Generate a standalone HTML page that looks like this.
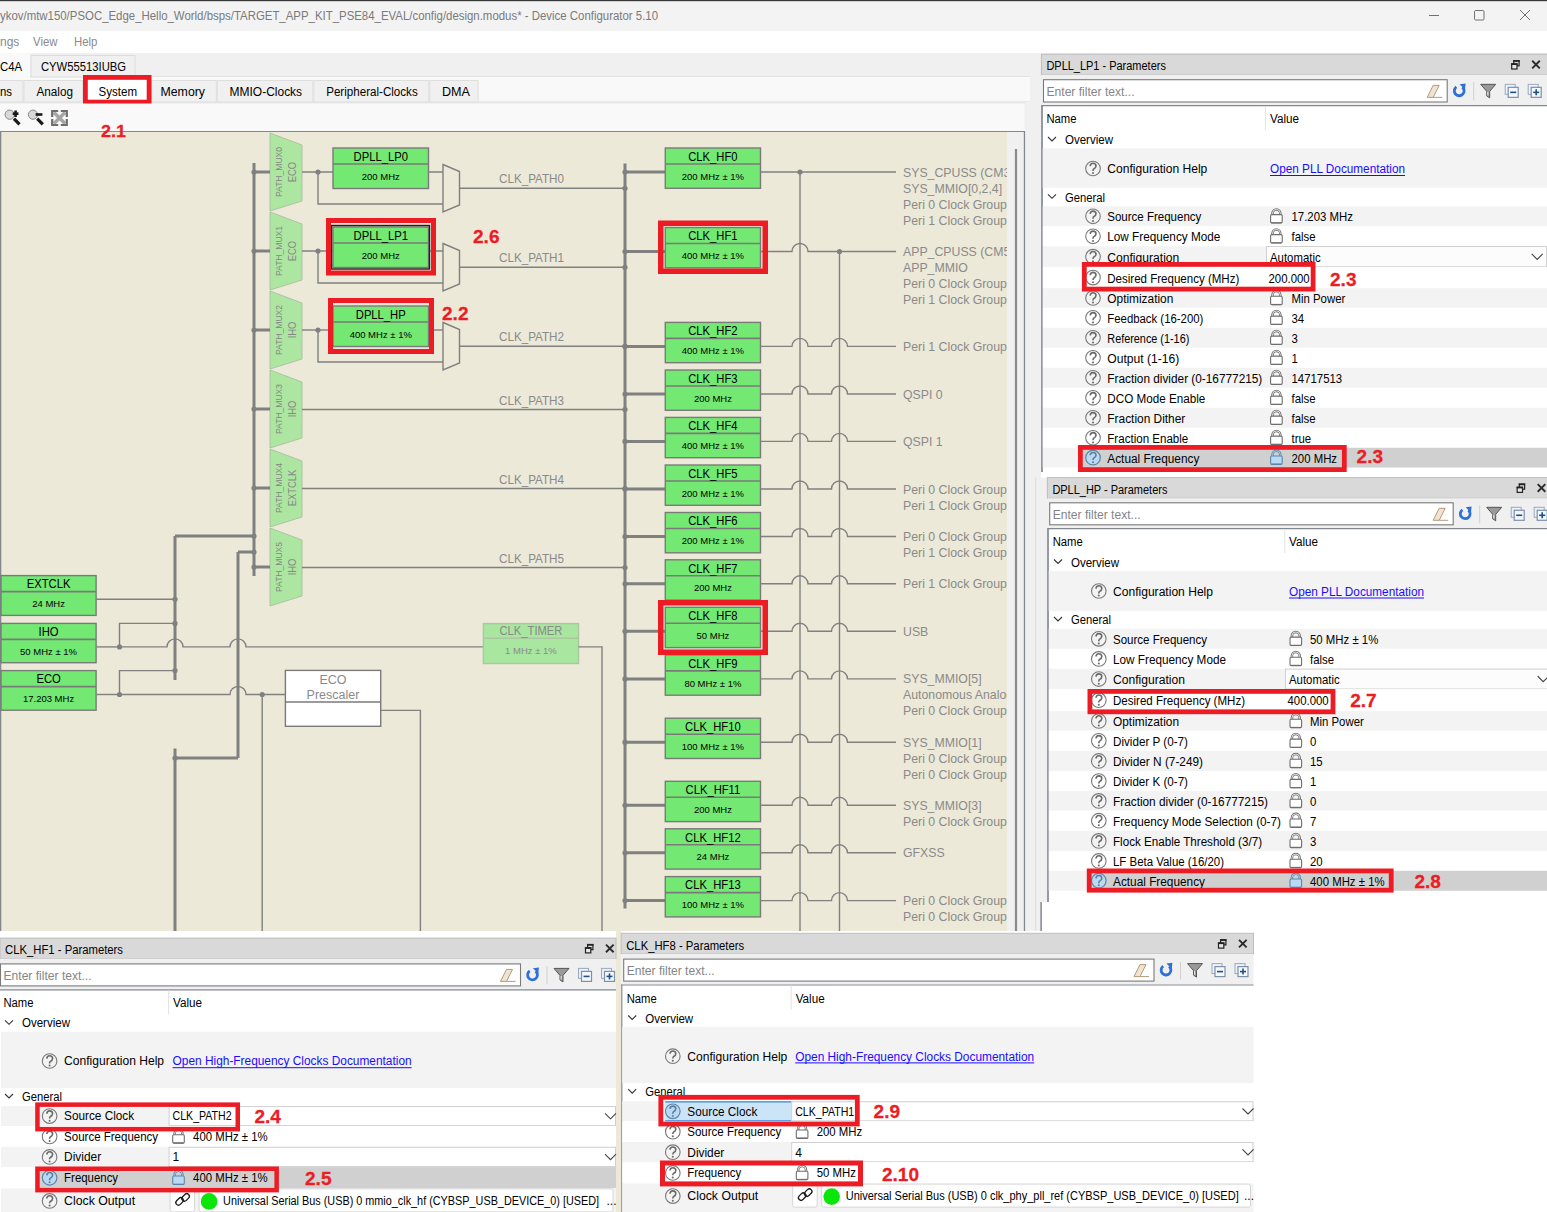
<!DOCTYPE html><html><head><meta charset="utf-8"><style>html,body{margin:0;padding:0;background:#fff;overflow:hidden}svg{display:block}</style></head><body><svg width="1547" height="1212" viewBox="0 0 1547 1212" font-family="Liberation Sans">
<rect x="0" y="0" width="1547" height="1212" fill="#ffffff" />
<rect x="0" y="0" width="1547" height="31" fill="#f3f3f3" />
<rect x="0" y="0" width="1547" height="1.2" fill="#3a3a3a" />
<text x="0" y="20" font-size="12.5" fill="#7a7a7a" textLength="658" lengthAdjust="spacingAndGlyphs" >ykov/mtw150/PSOC_Edge_Hello_World/bsps/TARGET_APP_KIT_PSE84_EVAL/config/design.modus* - Device Configurator 5.10</text>
<line x1="1429" y1="15.5" x2="1439" y2="15.5" stroke="#707070" stroke-width="1"/>
<rect x="1474.5" y="10.5" width="9.5" height="9.5" fill="none" stroke="#707070" stroke-width="1" rx="1.2"/>
<path d="M1520 10 L1530 20 M1530 10 L1520 20" stroke="#707070" stroke-width="1" fill="none" />
<rect x="0" y="31" width="1547" height="22" fill="#ffffff" />
<text x="0" y="46" font-size="12" fill="#8a8a8a" >ngs</text>
<text transform="translate(33 46) scale(0.95 1)" font-size="12" fill="#8a8a8a" >View</text>
<text transform="translate(74 46) scale(0.95 1)" font-size="12" fill="#8a8a8a" >Help</text>
<rect x="0" y="53" width="1040" height="878" fill="#f0f0f0" />
<rect x="-1" y="76.5" width="1035.2" height="860" fill="#f9f9f9" stroke="#e3e3e3" stroke-width="1" />
<line x1="0" y1="101.7" x2="1030" y2="101.7" stroke="#e6e6e6" stroke-width="1"/>
<line x1="1030" y1="101.7" x2="1030" y2="931" stroke="#e6e6e6" stroke-width="1"/>
<line x1="1026.4" y1="103.5" x2="1026.4" y2="931" stroke="#ebebeb" stroke-width="1"/>
<rect x="0" y="53" width="30" height="24" fill="#f9f9f9" />
<text transform="translate(0 71) scale(0.95 1)" font-size="12" fill="#000" >C4A</text>
<rect x="31" y="55.5" width="104" height="21.5" fill="#f0f0f0" stroke="#dcdcdc" stroke-width="1" />
<text x="41" y="71" font-size="12" fill="#000" textLength="85" lengthAdjust="spacingAndGlyphs" >CYW55513IUBG</text>
<line x1="0" y1="103" x2="1026.4" y2="103" stroke="#dadada" stroke-width="1"/>
<rect x="-19.5" y="80.5" width="42.5" height="21.5" fill="#f0f0f0" stroke="#dedede" stroke-width="1" />
<rect x="24.0" y="80.5" width="58.5" height="21.5" fill="#f0f0f0" stroke="#dedede" stroke-width="1" />
<rect x="83" y="78" width="68" height="25" fill="#ffffff" />
<rect x="151.5" y="80.5" width="64.80000000000001" height="21.5" fill="#f0f0f0" stroke="#dedede" stroke-width="1" />
<rect x="217.3" y="80.5" width="95.59999999999997" height="21.5" fill="#f0f0f0" stroke="#dedede" stroke-width="1" />
<rect x="313.9" y="80.5" width="114.90000000000003" height="21.5" fill="#f0f0f0" stroke="#dedede" stroke-width="1" />
<rect x="429.8" y="80.5" width="48.30000000000001" height="21.5" fill="#f0f0f0" stroke="#dedede" stroke-width="1" />
<text transform="translate(0 96) scale(0.95 1)" font-size="12" fill="#000" >ns</text>
<text x="36.5" y="96" font-size="12" fill="#000" textLength="36.5" lengthAdjust="spacingAndGlyphs" >Analog</text>
<text x="98.5" y="96" font-size="12" fill="#000" textLength="38.5" lengthAdjust="spacingAndGlyphs" >System</text>
<text x="160.5" y="96" font-size="12" fill="#000" textLength="44.5" lengthAdjust="spacingAndGlyphs" >Memory</text>
<text x="229.6" y="96" font-size="12" fill="#000" textLength="72.5" lengthAdjust="spacingAndGlyphs" >MMIO-Clocks</text>
<text x="326.2" y="96" font-size="12" fill="#000" textLength="91.5" lengthAdjust="spacingAndGlyphs" >Peripheral-Clocks</text>
<text x="442" y="96" font-size="12" fill="#000" textLength="28" lengthAdjust="spacingAndGlyphs" >DMA</text>
<rect x="85.4" y="77.4" width="63.7" height="24.7" fill="none" stroke="#ed1c24" stroke-width="4.8" />
<rect x="0" y="103.5" width="1026" height="27.5" fill="#f9f9f9" />
<circle cx="9.7" cy="114.7" r="4.6" fill="#d9d9d9" stroke="#8a8a8a" stroke-width="1"/>
<line x1="13.899999999999999" y1="118.6" x2="19.5" y2="124.4" stroke="#1a1a1a" stroke-width="3.2"/>
<line x1="12.7" y1="113.7" x2="18.5" y2="113.7" stroke="#1a1a1a" stroke-width="2.6"/>
<line x1="15.6" y1="110.5" x2="15.6" y2="117" stroke="#1a1a1a" stroke-width="2.6"/>
<circle cx="33" cy="114.7" r="4.6" fill="#d9d9d9" stroke="#8a8a8a" stroke-width="1"/>
<line x1="37.2" y1="118.6" x2="42.8" y2="124.4" stroke="#1a1a1a" stroke-width="3.2"/>
<line x1="35.6" y1="114.5" x2="42.4" y2="114.5" stroke="#1a1a1a" stroke-width="2.6"/>
<path d="M54 112.5 L65 123.5 M65 112.5 L54 123.5" stroke="#a6a6a6" stroke-width="3.4" fill="none" />
<path d="M52.2 117 L52.2 111 L58.2 111 M60.8 111 L66.8 111 L66.8 117 M66.8 119 L66.8 125 L60.8 125 M58.2 125 L52.2 125 L52.2 119" stroke="#6e6e6e" stroke-width="2.2" fill="none" />
<defs><clipPath id="diag"><rect x="0" y="131.5" width="1007" height="800"/></clipPath></defs>
<rect x="0" y="131" width="1025" height="800" fill="#ece9d8" />
<rect x="1007" y="132" width="17.5" height="799" fill="#f0f0f0" />
<line x1="0" y1="131.5" x2="1025" y2="131.5" stroke="#828790" stroke-width="1.2"/>
<line x1="0.6" y1="131" x2="0.6" y2="931" stroke="#828790" stroke-width="1.4"/>
<line x1="1024.5" y1="131" x2="1024.5" y2="931" stroke="#828790" stroke-width="1.2"/>
<line x1="1016" y1="149" x2="1016" y2="931" stroke="#8a8a8a" stroke-width="2.2"/>
<g clip-path="url(#diag)">
<path d="M270 133 L302 145 L302 201 L270 211 Z" stroke="#a9bfa2" stroke-width="0.9" fill="#ade6a0" />
<g transform="translate(285 172) rotate(-90)">
<text x="-25" y="-3.1" font-size="9.8" fill="#868686" textLength="50" lengthAdjust="spacingAndGlyphs" >PATH_MUX0</text>
<text transform="translate(0 11.4) scale(0.92 1)" font-size="10.2" fill="#868686" text-anchor="middle" >ECO</text>
</g>
<line x1="254" y1="172" x2="270" y2="172" stroke="#808080" stroke-width="3"/>
<circle cx="254" cy="172" r="2.6" fill="#808080"/>
<path d="M270 212 L302 224 L302 280 L270 290 Z" stroke="#a9bfa2" stroke-width="0.9" fill="#ade6a0" />
<g transform="translate(285 251) rotate(-90)">
<text x="-25" y="-3.1" font-size="9.8" fill="#868686" textLength="50" lengthAdjust="spacingAndGlyphs" >PATH_MUX1</text>
<text transform="translate(0 11.4) scale(0.92 1)" font-size="10.2" fill="#868686" text-anchor="middle" >ECO</text>
</g>
<line x1="254" y1="251" x2="270" y2="251" stroke="#808080" stroke-width="3"/>
<circle cx="254" cy="251" r="2.6" fill="#808080"/>
<path d="M270 291 L302 303 L302 359 L270 369 Z" stroke="#a9bfa2" stroke-width="0.9" fill="#ade6a0" />
<g transform="translate(285 330) rotate(-90)">
<text x="-25" y="-3.1" font-size="9.8" fill="#868686" textLength="50" lengthAdjust="spacingAndGlyphs" >PATH_MUX2</text>
<text transform="translate(0 11.4) scale(0.92 1)" font-size="10.2" fill="#868686" text-anchor="middle" >IHO</text>
</g>
<line x1="254" y1="330" x2="270" y2="330" stroke="#808080" stroke-width="3"/>
<circle cx="254" cy="330" r="2.6" fill="#808080"/>
<path d="M270 370 L302 382 L302 438 L270 448 Z" stroke="#a9bfa2" stroke-width="0.9" fill="#ade6a0" />
<g transform="translate(285 409) rotate(-90)">
<text x="-25" y="-3.1" font-size="9.8" fill="#868686" textLength="50" lengthAdjust="spacingAndGlyphs" >PATH_MUX3</text>
<text transform="translate(0 11.4) scale(0.92 1)" font-size="10.2" fill="#868686" text-anchor="middle" >IHO</text>
</g>
<line x1="254" y1="409" x2="270" y2="409" stroke="#808080" stroke-width="3"/>
<circle cx="254" cy="409" r="2.6" fill="#808080"/>
<path d="M270 449 L302 461 L302 517 L270 527 Z" stroke="#a9bfa2" stroke-width="0.9" fill="#ade6a0" />
<g transform="translate(285 488) rotate(-90)">
<text x="-25" y="-3.1" font-size="9.8" fill="#868686" textLength="50" lengthAdjust="spacingAndGlyphs" >PATH_MUX4</text>
<text transform="translate(0 11.4) scale(0.92 1)" font-size="10.2" fill="#868686" text-anchor="middle" >EXTCLK</text>
</g>
<line x1="254" y1="488" x2="270" y2="488" stroke="#808080" stroke-width="3"/>
<circle cx="254" cy="488" r="2.6" fill="#808080"/>
<path d="M270 528 L302 540 L302 596 L270 606 Z" stroke="#a9bfa2" stroke-width="0.9" fill="#ade6a0" />
<g transform="translate(285 567) rotate(-90)">
<text x="-25" y="-3.1" font-size="9.8" fill="#868686" textLength="50" lengthAdjust="spacingAndGlyphs" >PATH_MUX5</text>
<text transform="translate(0 11.4) scale(0.92 1)" font-size="10.2" fill="#868686" text-anchor="middle" >IHO</text>
</g>
<line x1="254" y1="567" x2="270" y2="567" stroke="#808080" stroke-width="3"/>
<circle cx="254" cy="567" r="2.6" fill="#808080"/>
<line x1="254" y1="163" x2="254" y2="576" stroke="#808080" stroke-width="3"/>
<circle cx="254" cy="536" r="2.6" fill="#808080"/>
<circle cx="254" cy="552" r="2.6" fill="#808080"/>
<line x1="302" y1="172" x2="333" y2="172" stroke="#808080" stroke-width="1.4"/>
<circle cx="318" cy="172" r="2.6" fill="#808080"/>
<path d="M318 172 L318 204 L443 204" stroke="#808080" stroke-width="1.4" fill="none" />
<rect x="333" y="148" width="95.5" height="40.5" fill="#73e873" stroke="#7a7a7a" stroke-width="1.4" />
<line x1="333" y1="164" x2="428.5" y2="164" stroke="#7a7a7a" stroke-width="1.6"/>
<text transform="translate(380.75 160.8) scale(0.9 1)" font-size="12.5" fill="#000" text-anchor="middle" >DPLL_LP0</text>
<text x="380.75" y="179.75" font-size="9.5" fill="#000" text-anchor="middle" >200 MHz</text>
<line x1="428.5" y1="172" x2="443" y2="172" stroke="#808080" stroke-width="1.4"/>
<path d="M443 164.5 L459.5 171.5 L459.5 205 L443 212 Z" stroke="#808080" stroke-width="1.4" fill="none" />
<line x1="459.5" y1="188.3" x2="625" y2="188.3" stroke="#808080" stroke-width="1.4"/>
<line x1="302" y1="251" x2="333" y2="251" stroke="#808080" stroke-width="1.4"/>
<circle cx="318" cy="251" r="2.6" fill="#808080"/>
<path d="M318 251 L318 283 L443 283" stroke="#808080" stroke-width="1.4" fill="none" />
<rect x="333" y="227" width="95.5" height="40.5" fill="#73e873" stroke="#7a7a7a" stroke-width="1.4" />
<line x1="333" y1="243" x2="428.5" y2="243" stroke="#7a7a7a" stroke-width="1.6"/>
<text transform="translate(380.75 239.8) scale(0.9 1)" font-size="12.5" fill="#000" text-anchor="middle" >DPLL_LP1</text>
<text x="380.75" y="258.75" font-size="9.5" fill="#000" text-anchor="middle" >200 MHz</text>
<line x1="428.5" y1="251" x2="443" y2="251" stroke="#808080" stroke-width="1.4"/>
<path d="M443 243.5 L459.5 250.5 L459.5 284 L443 291 Z" stroke="#808080" stroke-width="1.4" fill="none" />
<line x1="459.5" y1="267.3" x2="625" y2="267.3" stroke="#808080" stroke-width="1.4"/>
<line x1="302" y1="330" x2="333" y2="330" stroke="#808080" stroke-width="1.4"/>
<circle cx="318" cy="330" r="2.6" fill="#808080"/>
<path d="M318 330 L318 362 L443 362" stroke="#808080" stroke-width="1.4" fill="none" />
<rect x="333" y="306" width="95.5" height="40.5" fill="#73e873" stroke="#7a7a7a" stroke-width="1.4" />
<line x1="333" y1="322" x2="428.5" y2="322" stroke="#7a7a7a" stroke-width="1.6"/>
<text transform="translate(380.75 318.8) scale(0.9 1)" font-size="12.5" fill="#000" text-anchor="middle" >DPLL_HP</text>
<text x="380.75" y="337.75" font-size="9.5" fill="#000" text-anchor="middle" >400 MHz ± 1%</text>
<line x1="428.5" y1="330" x2="443" y2="330" stroke="#808080" stroke-width="1.4"/>
<path d="M443 322.5 L459.5 329.5 L459.5 363 L443 370 Z" stroke="#808080" stroke-width="1.4" fill="none" />
<line x1="459.5" y1="346.3" x2="625" y2="346.3" stroke="#808080" stroke-width="1.4"/>
<rect x="331.5" y="225.5" width="98" height="43.5" fill="none" stroke="#202020" stroke-width="1.4" />
<line x1="302" y1="409.5" x2="625" y2="409.5" stroke="#808080" stroke-width="1.4"/>
<line x1="302" y1="488.5" x2="625" y2="488.5" stroke="#808080" stroke-width="1.4"/>
<line x1="302" y1="567.5" x2="625" y2="567.5" stroke="#808080" stroke-width="1.4"/>
<circle cx="625" cy="188.3" r="2.6" fill="#808080"/>
<text x="499" y="183.3" font-size="12.5" fill="#8a8a8a" textLength="65" lengthAdjust="spacingAndGlyphs" >CLK_PATH0</text>
<circle cx="625" cy="267.3" r="2.6" fill="#808080"/>
<text x="499" y="262.3" font-size="12.5" fill="#8a8a8a" textLength="65" lengthAdjust="spacingAndGlyphs" >CLK_PATH1</text>
<circle cx="625" cy="346.3" r="2.6" fill="#808080"/>
<text x="499" y="341.3" font-size="12.5" fill="#8a8a8a" textLength="65" lengthAdjust="spacingAndGlyphs" >CLK_PATH2</text>
<circle cx="625" cy="409.5" r="2.6" fill="#808080"/>
<text x="499" y="404.5" font-size="12.5" fill="#8a8a8a" textLength="65" lengthAdjust="spacingAndGlyphs" >CLK_PATH3</text>
<circle cx="625" cy="488.5" r="2.6" fill="#808080"/>
<text x="499" y="483.5" font-size="12.5" fill="#8a8a8a" textLength="65" lengthAdjust="spacingAndGlyphs" >CLK_PATH4</text>
<circle cx="625" cy="567.5" r="2.6" fill="#808080"/>
<text x="499" y="562.5" font-size="12.5" fill="#8a8a8a" textLength="65" lengthAdjust="spacingAndGlyphs" >CLK_PATH5</text>
<line x1="625" y1="163.6" x2="625" y2="908.5" stroke="#808080" stroke-width="3"/>
<line x1="800" y1="172" x2="800" y2="931" stroke="#808080" stroke-width="1.4"/>
<line x1="839.5" y1="251.5" x2="839.5" y2="931" stroke="#808080" stroke-width="1.4"/>
<line x1="625" y1="172" x2="665" y2="172" stroke="#808080" stroke-width="3"/>
<circle cx="625" cy="172" r="2.6" fill="#808080"/>
<rect x="665.3" y="148" width="95.20000000000005" height="40.30000000000001" fill="#73e873" stroke="#7a7a7a" stroke-width="1.4" />
<line x1="665.3" y1="164" x2="760.5" y2="164" stroke="#7a7a7a" stroke-width="1.6"/>
<text transform="translate(712.9 160.8) scale(0.9 1)" font-size="12.5" fill="#000" text-anchor="middle" >CLK_HF0</text>
<text x="712.9" y="179.65" font-size="9.5" fill="#000" text-anchor="middle" >200 MHz ± 1%</text>
<line x1="760.5" y1="172" x2="896" y2="172" stroke="#808080" stroke-width="1.4"/>
<circle cx="800" cy="172" r="2.6" fill="#808080"/>
<text transform="translate(903 176.5) scale(0.985 1)" font-size="12.5" fill="#8a8a8a" >SYS_CPUSS (CM33)</text>
<text transform="translate(903 192.5) scale(0.985 1)" font-size="12.5" fill="#8a8a8a" >SYS_MMIO[0,2,4]</text>
<text transform="translate(903 208.5) scale(0.985 1)" font-size="12.5" fill="#8a8a8a" >Peri 0 Clock Group</text>
<text transform="translate(903 224.5) scale(0.985 1)" font-size="12.5" fill="#8a8a8a" >Peri 1 Clock Group</text>
<line x1="625" y1="251.5" x2="665" y2="251.5" stroke="#808080" stroke-width="3"/>
<circle cx="625" cy="251.5" r="2.6" fill="#808080"/>
<rect x="665.3" y="227.5" width="95.20000000000005" height="40.30000000000001" fill="#73e873" stroke="#7a7a7a" stroke-width="1.4" />
<line x1="665.3" y1="243.5" x2="760.5" y2="243.5" stroke="#7a7a7a" stroke-width="1.6"/>
<text transform="translate(712.9 240.3) scale(0.9 1)" font-size="12.5" fill="#000" text-anchor="middle" >CLK_HF1</text>
<text x="712.9" y="259.15" font-size="9.5" fill="#000" text-anchor="middle" >400 MHz ± 1%</text>
<path d="M760.5 251.5 L792 251.5 A8 8 0 0 1 808 251.5 L896 251.5" stroke="#808080" stroke-width="1.4" fill="none" />
<circle cx="839.5" cy="251.5" r="2.6" fill="#808080"/>
<text transform="translate(903 256.0) scale(0.985 1)" font-size="12.5" fill="#8a8a8a" >APP_CPUSS (CM55)</text>
<text transform="translate(903 272.0) scale(0.985 1)" font-size="12.5" fill="#8a8a8a" >APP_MMIO</text>
<text transform="translate(903 288.0) scale(0.985 1)" font-size="12.5" fill="#8a8a8a" >Peri 0 Clock Group</text>
<text transform="translate(903 304.0) scale(0.985 1)" font-size="12.5" fill="#8a8a8a" >Peri 1 Clock Group</text>
<line x1="625" y1="346.4" x2="665" y2="346.4" stroke="#808080" stroke-width="3"/>
<circle cx="625" cy="346.4" r="2.6" fill="#808080"/>
<rect x="665.3" y="322.4" width="95.20000000000005" height="40.30000000000001" fill="#73e873" stroke="#7a7a7a" stroke-width="1.4" />
<line x1="665.3" y1="338.4" x2="760.5" y2="338.4" stroke="#7a7a7a" stroke-width="1.6"/>
<text transform="translate(712.9 335.2) scale(0.9 1)" font-size="12.5" fill="#000" text-anchor="middle" >CLK_HF2</text>
<text x="712.9" y="354.04999999999995" font-size="9.5" fill="#000" text-anchor="middle" >400 MHz ± 1%</text>
<path d="M760.5 346.4 L792 346.4 A8 8 0 0 1 808 346.4 L831.5 346.4 A8 8 0 0 1 847.5 346.4 L896 346.4" stroke="#808080" stroke-width="1.4" fill="none" />
<text transform="translate(903 350.9) scale(0.985 1)" font-size="12.5" fill="#8a8a8a" >Peri 1 Clock Group</text>
<line x1="625" y1="394" x2="665" y2="394" stroke="#808080" stroke-width="3"/>
<circle cx="625" cy="394" r="2.6" fill="#808080"/>
<rect x="665.3" y="370" width="95.20000000000005" height="40.30000000000001" fill="#73e873" stroke="#7a7a7a" stroke-width="1.4" />
<line x1="665.3" y1="386" x2="760.5" y2="386" stroke="#7a7a7a" stroke-width="1.6"/>
<text transform="translate(712.9 382.8) scale(0.9 1)" font-size="12.5" fill="#000" text-anchor="middle" >CLK_HF3</text>
<text x="712.9" y="401.65" font-size="9.5" fill="#000" text-anchor="middle" >200 MHz</text>
<path d="M760.5 394 L792 394 A8 8 0 0 1 808 394 L831.5 394 A8 8 0 0 1 847.5 394 L896 394" stroke="#808080" stroke-width="1.4" fill="none" />
<text transform="translate(903 398.5) scale(0.985 1)" font-size="12.5" fill="#8a8a8a" >QSPI 0</text>
<line x1="625" y1="441.4" x2="665" y2="441.4" stroke="#808080" stroke-width="3"/>
<circle cx="625" cy="441.4" r="2.6" fill="#808080"/>
<rect x="665.3" y="417.4" width="95.20000000000005" height="40.30000000000001" fill="#73e873" stroke="#7a7a7a" stroke-width="1.4" />
<line x1="665.3" y1="433.4" x2="760.5" y2="433.4" stroke="#7a7a7a" stroke-width="1.6"/>
<text transform="translate(712.9 430.2) scale(0.9 1)" font-size="12.5" fill="#000" text-anchor="middle" >CLK_HF4</text>
<text x="712.9" y="449.04999999999995" font-size="9.5" fill="#000" text-anchor="middle" >400 MHz ± 1%</text>
<path d="M760.5 441.4 L792 441.4 A8 8 0 0 1 808 441.4 L831.5 441.4 A8 8 0 0 1 847.5 441.4 L896 441.4" stroke="#808080" stroke-width="1.4" fill="none" />
<text transform="translate(903 445.9) scale(0.985 1)" font-size="12.5" fill="#8a8a8a" >QSPI 1</text>
<line x1="625" y1="489" x2="665" y2="489" stroke="#808080" stroke-width="3"/>
<circle cx="625" cy="489" r="2.6" fill="#808080"/>
<rect x="665.3" y="465" width="95.20000000000005" height="40.30000000000001" fill="#73e873" stroke="#7a7a7a" stroke-width="1.4" />
<line x1="665.3" y1="481" x2="760.5" y2="481" stroke="#7a7a7a" stroke-width="1.6"/>
<text transform="translate(712.9 477.8) scale(0.9 1)" font-size="12.5" fill="#000" text-anchor="middle" >CLK_HF5</text>
<text x="712.9" y="496.65" font-size="9.5" fill="#000" text-anchor="middle" >200 MHz ± 1%</text>
<path d="M760.5 489 L792 489 A8 8 0 0 1 808 489 L831.5 489 A8 8 0 0 1 847.5 489 L896 489" stroke="#808080" stroke-width="1.4" fill="none" />
<text transform="translate(903 493.5) scale(0.985 1)" font-size="12.5" fill="#8a8a8a" >Peri 0 Clock Group</text>
<text transform="translate(903 509.5) scale(0.985 1)" font-size="12.5" fill="#8a8a8a" >Peri 1 Clock Group</text>
<line x1="625" y1="536.5" x2="665" y2="536.5" stroke="#808080" stroke-width="3"/>
<circle cx="625" cy="536.5" r="2.6" fill="#808080"/>
<rect x="665.3" y="512.5" width="95.20000000000005" height="40.299999999999955" fill="#73e873" stroke="#7a7a7a" stroke-width="1.4" />
<line x1="665.3" y1="528.5" x2="760.5" y2="528.5" stroke="#7a7a7a" stroke-width="1.6"/>
<text transform="translate(712.9 525.3) scale(0.9 1)" font-size="12.5" fill="#000" text-anchor="middle" >CLK_HF6</text>
<text x="712.9" y="544.15" font-size="9.5" fill="#000" text-anchor="middle" >200 MHz ± 1%</text>
<path d="M760.5 536.5 L792 536.5 A8 8 0 0 1 808 536.5 L831.5 536.5 A8 8 0 0 1 847.5 536.5 L896 536.5" stroke="#808080" stroke-width="1.4" fill="none" />
<text transform="translate(903 541.0) scale(0.985 1)" font-size="12.5" fill="#8a8a8a" >Peri 0 Clock Group</text>
<text transform="translate(903 557.0) scale(0.985 1)" font-size="12.5" fill="#8a8a8a" >Peri 1 Clock Group</text>
<line x1="625" y1="583.8" x2="665" y2="583.8" stroke="#808080" stroke-width="3"/>
<circle cx="625" cy="583.8" r="2.6" fill="#808080"/>
<rect x="665.3" y="559.8" width="95.20000000000005" height="40.299999999999955" fill="#73e873" stroke="#7a7a7a" stroke-width="1.4" />
<line x1="665.3" y1="575.8" x2="760.5" y2="575.8" stroke="#7a7a7a" stroke-width="1.6"/>
<text transform="translate(712.9 572.5999999999999) scale(0.9 1)" font-size="12.5" fill="#000" text-anchor="middle" >CLK_HF7</text>
<text x="712.9" y="591.4499999999999" font-size="9.5" fill="#000" text-anchor="middle" >200 MHz</text>
<path d="M760.5 583.8 L792 583.8 A8 8 0 0 1 808 583.8 L831.5 583.8 A8 8 0 0 1 847.5 583.8 L896 583.8" stroke="#808080" stroke-width="1.4" fill="none" />
<text transform="translate(903 588.3) scale(0.985 1)" font-size="12.5" fill="#8a8a8a" >Peri 1 Clock Group</text>
<line x1="625" y1="631.3" x2="665" y2="631.3" stroke="#808080" stroke-width="3"/>
<circle cx="625" cy="631.3" r="2.6" fill="#808080"/>
<rect x="665.3" y="607.3" width="95.20000000000005" height="40.299999999999955" fill="#73e873" stroke="#7a7a7a" stroke-width="1.4" />
<line x1="665.3" y1="623.3" x2="760.5" y2="623.3" stroke="#7a7a7a" stroke-width="1.6"/>
<text transform="translate(712.9 620.0999999999999) scale(0.9 1)" font-size="12.5" fill="#000" text-anchor="middle" >CLK_HF8</text>
<text x="712.9" y="638.9499999999999" font-size="9.5" fill="#000" text-anchor="middle" >50 MHz</text>
<path d="M760.5 631.3 L792 631.3 A8 8 0 0 1 808 631.3 L831.5 631.3 A8 8 0 0 1 847.5 631.3 L896 631.3" stroke="#808080" stroke-width="1.4" fill="none" />
<text transform="translate(903 635.8) scale(0.985 1)" font-size="12.5" fill="#8a8a8a" >USB</text>
<line x1="625" y1="678.9" x2="665" y2="678.9" stroke="#808080" stroke-width="3"/>
<circle cx="625" cy="678.9" r="2.6" fill="#808080"/>
<rect x="665.3" y="654.9" width="95.20000000000005" height="40.299999999999955" fill="#73e873" stroke="#7a7a7a" stroke-width="1.4" />
<line x1="665.3" y1="670.9" x2="760.5" y2="670.9" stroke="#7a7a7a" stroke-width="1.6"/>
<text transform="translate(712.9 667.6999999999999) scale(0.9 1)" font-size="12.5" fill="#000" text-anchor="middle" >CLK_HF9</text>
<text x="712.9" y="686.55" font-size="9.5" fill="#000" text-anchor="middle" >80 MHz ± 1%</text>
<path d="M760.5 678.9 L792 678.9 A8 8 0 0 1 808 678.9 L831.5 678.9 A8 8 0 0 1 847.5 678.9 L896 678.9" stroke="#808080" stroke-width="1.4" fill="none" />
<text transform="translate(903 683.4) scale(0.985 1)" font-size="12.5" fill="#8a8a8a" >SYS_MMIO[5]</text>
<text transform="translate(903 699.4) scale(0.985 1)" font-size="12.5" fill="#8a8a8a" >Autonomous Analog</text>
<text transform="translate(903 715.4) scale(0.985 1)" font-size="12.5" fill="#8a8a8a" >Peri 0 Clock Group</text>
<line x1="625" y1="742.2" x2="665" y2="742.2" stroke="#808080" stroke-width="3"/>
<circle cx="625" cy="742.2" r="2.6" fill="#808080"/>
<rect x="665.3" y="718.2" width="95.20000000000005" height="40.299999999999955" fill="#73e873" stroke="#7a7a7a" stroke-width="1.4" />
<line x1="665.3" y1="734.2" x2="760.5" y2="734.2" stroke="#7a7a7a" stroke-width="1.6"/>
<text transform="translate(712.9 731.0) scale(0.9 1)" font-size="12.5" fill="#000" text-anchor="middle" >CLK_HF10</text>
<text x="712.9" y="749.85" font-size="9.5" fill="#000" text-anchor="middle" >100 MHz ± 1%</text>
<path d="M760.5 742.2 L792 742.2 A8 8 0 0 1 808 742.2 L831.5 742.2 A8 8 0 0 1 847.5 742.2 L896 742.2" stroke="#808080" stroke-width="1.4" fill="none" />
<text transform="translate(903 746.7) scale(0.985 1)" font-size="12.5" fill="#8a8a8a" >SYS_MMIO[1]</text>
<text transform="translate(903 762.7) scale(0.985 1)" font-size="12.5" fill="#8a8a8a" >Peri 0 Clock Group</text>
<text transform="translate(903 778.7) scale(0.985 1)" font-size="12.5" fill="#8a8a8a" >Peri 0 Clock Group</text>
<line x1="625" y1="805.3" x2="665" y2="805.3" stroke="#808080" stroke-width="3"/>
<circle cx="625" cy="805.3" r="2.6" fill="#808080"/>
<rect x="665.3" y="781.3" width="95.20000000000005" height="40.299999999999955" fill="#73e873" stroke="#7a7a7a" stroke-width="1.4" />
<line x1="665.3" y1="797.3" x2="760.5" y2="797.3" stroke="#7a7a7a" stroke-width="1.6"/>
<text transform="translate(712.9 794.0999999999999) scale(0.9 1)" font-size="12.5" fill="#000" text-anchor="middle" >CLK_HF11</text>
<text x="712.9" y="812.9499999999999" font-size="9.5" fill="#000" text-anchor="middle" >200 MHz</text>
<path d="M760.5 805.3 L792 805.3 A8 8 0 0 1 808 805.3 L831.5 805.3 A8 8 0 0 1 847.5 805.3 L896 805.3" stroke="#808080" stroke-width="1.4" fill="none" />
<text transform="translate(903 809.8) scale(0.985 1)" font-size="12.5" fill="#8a8a8a" >SYS_MMIO[3]</text>
<text transform="translate(903 825.8) scale(0.985 1)" font-size="12.5" fill="#8a8a8a" >Peri 0 Clock Group</text>
<line x1="625" y1="852.8" x2="665" y2="852.8" stroke="#808080" stroke-width="3"/>
<circle cx="625" cy="852.8" r="2.6" fill="#808080"/>
<rect x="665.3" y="828.8" width="95.20000000000005" height="40.299999999999955" fill="#73e873" stroke="#7a7a7a" stroke-width="1.4" />
<line x1="665.3" y1="844.8" x2="760.5" y2="844.8" stroke="#7a7a7a" stroke-width="1.6"/>
<text transform="translate(712.9 841.5999999999999) scale(0.9 1)" font-size="12.5" fill="#000" text-anchor="middle" >CLK_HF12</text>
<text x="712.9" y="860.4499999999999" font-size="9.5" fill="#000" text-anchor="middle" >24 MHz</text>
<path d="M760.5 852.8 L792 852.8 A8 8 0 0 1 808 852.8 L831.5 852.8 A8 8 0 0 1 847.5 852.8 L896 852.8" stroke="#808080" stroke-width="1.4" fill="none" />
<text transform="translate(903 857.3) scale(0.985 1)" font-size="12.5" fill="#8a8a8a" >GFXSS</text>
<line x1="625" y1="900.6" x2="665" y2="900.6" stroke="#808080" stroke-width="3"/>
<circle cx="625" cy="900.6" r="2.6" fill="#808080"/>
<rect x="665.3" y="876.6" width="95.20000000000005" height="40.299999999999955" fill="#73e873" stroke="#7a7a7a" stroke-width="1.4" />
<line x1="665.3" y1="892.6" x2="760.5" y2="892.6" stroke="#7a7a7a" stroke-width="1.6"/>
<text transform="translate(712.9 889.4) scale(0.9 1)" font-size="12.5" fill="#000" text-anchor="middle" >CLK_HF13</text>
<text x="712.9" y="908.25" font-size="9.5" fill="#000" text-anchor="middle" >100 MHz ± 1%</text>
<path d="M760.5 900.6 L792 900.6 A8 8 0 0 1 808 900.6 L831.5 900.6 A8 8 0 0 1 847.5 900.6 L896 900.6" stroke="#808080" stroke-width="1.4" fill="none" />
<text transform="translate(903 905.1) scale(0.985 1)" font-size="12.5" fill="#8a8a8a" >Peri 0 Clock Group</text>
<text transform="translate(903 921.1) scale(0.985 1)" font-size="12.5" fill="#8a8a8a" >Peri 0 Clock Group</text>
<rect x="1" y="575.6" width="95.1" height="39.799999999999955" fill="#73e873" stroke="#7a7a7a" stroke-width="1.4" />
<line x1="1" y1="591.6" x2="96.1" y2="591.6" stroke="#7a7a7a" stroke-width="1.6"/>
<text transform="translate(48.55 588.4) scale(0.9 1)" font-size="12.5" fill="#000" text-anchor="middle" >EXTCLK</text>
<text x="48.55" y="607.0" font-size="9.5" fill="#000" text-anchor="middle" >24 MHz</text>
<rect x="1" y="623.4" width="95.1" height="39.30000000000007" fill="#73e873" stroke="#7a7a7a" stroke-width="1.4" />
<line x1="1" y1="639.4" x2="96.1" y2="639.4" stroke="#7a7a7a" stroke-width="1.6"/>
<text transform="translate(48.55 636.1999999999999) scale(0.9 1)" font-size="12.5" fill="#000" text-anchor="middle" >IHO</text>
<text x="48.55" y="654.55" font-size="9.5" fill="#000" text-anchor="middle" >50 MHz ± 1%</text>
<rect x="1" y="670.6" width="95.1" height="39.60000000000002" fill="#73e873" stroke="#7a7a7a" stroke-width="1.4" />
<line x1="1" y1="686.6" x2="96.1" y2="686.6" stroke="#7a7a7a" stroke-width="1.6"/>
<text transform="translate(48.55 683.4) scale(0.9 1)" font-size="12.5" fill="#000" text-anchor="middle" >ECO</text>
<text x="48.55" y="701.9000000000001" font-size="9.5" fill="#000" text-anchor="middle" >17.203 MHz</text>
<line x1="96" y1="599.3" x2="175" y2="599.3" stroke="#808080" stroke-width="1.4"/>
<circle cx="175" cy="599.3" r="2.6" fill="#808080"/>
<line x1="96" y1="694.5" x2="119.5" y2="694.5" stroke="#808080" stroke-width="1.4"/>
<path d="M119.5 694.5 L119.5 670.6 L175 670.6" stroke="#808080" stroke-width="1.4" fill="none" />
<circle cx="119.5" cy="694.5" r="2.6" fill="#808080"/>
<circle cx="175" cy="670.6" r="2.6" fill="#808080"/>
<path d="M119.5 646.9 L119.5 623.4 L175 623.4" stroke="#808080" stroke-width="1.4" fill="none" />
<circle cx="119.5" cy="646.9" r="2.6" fill="#808080"/>
<circle cx="175" cy="623.4" r="2.6" fill="#808080"/>
<line x1="96" y1="646.9" x2="119.5" y2="646.9" stroke="#808080" stroke-width="1.4"/>
<path d="M119.5 646.9 L167 646.9 A8 8 0 0 1 183 646.9 L230 646.9 A8 8 0 0 1 246 646.9 L483.4 646.9" stroke="#808080" stroke-width="1.4" fill="none" />
<path d="M119.5 694.5 L230 694.5 A8 8 0 0 1 246 694.5 L285.4 694.5" stroke="#808080" stroke-width="1.4" fill="none" />
<circle cx="262.2" cy="694.5" r="2.6" fill="#808080"/>
<line x1="262.2" y1="694.5" x2="262.2" y2="931" stroke="#808080" stroke-width="1.4"/>
<path d="M175 536 L254 536" stroke="#808080" stroke-width="3" fill="none" />
<path d="M238 552 L254 552" stroke="#808080" stroke-width="3" fill="none" />
<line x1="175" y1="536" x2="175" y2="680" stroke="#808080" stroke-width="3"/>
<line x1="238" y1="552" x2="238" y2="758" stroke="#808080" stroke-width="3"/>
<line x1="175" y1="758" x2="238" y2="758" stroke="#808080" stroke-width="3"/>
<line x1="175" y1="748.5" x2="175" y2="931" stroke="#808080" stroke-width="3"/>
<circle cx="175" cy="758" r="2.6" fill="#808080"/>
<rect x="483.4" y="623.6" width="95.10000000000002" height="39.89999999999998" fill="#a9e6a0" stroke="#a9c8a0" stroke-width="1.4" />
<line x1="483.4" y1="638.3000000000001" x2="578.5" y2="638.3000000000001" stroke="#a9c8a0" stroke-width="1.6"/>
<text transform="translate(530.95 635.1) scale(0.9 1)" font-size="12.5" fill="#8a8a8a" text-anchor="middle" >CLK_TIMER</text>
<text x="530.95" y="654.4000000000001" font-size="9.5" fill="#8a8a8a" text-anchor="middle" >1 MHz ± 1%</text>
<path d="M578.5 646.9 L602 646.9 L602 931" stroke="#808080" stroke-width="1.4" fill="none" />
<rect x="285.4" y="670.4" width="95.3" height="55.9" fill="#ffffff" stroke="#7a7a7a" stroke-width="1.4" />
<line x1="285.4" y1="702" x2="380.7" y2="702" stroke="#7a7a7a" stroke-width="1.6"/>
<text x="333" y="683.5" font-size="12.5" fill="#8a8a8a" text-anchor="middle" >ECO</text>
<text x="333" y="699" font-size="12.5" fill="#8a8a8a" text-anchor="middle" >Prescaler</text>
<path d="M380.7 710.4 L420.4 710.4 L420.4 931" stroke="#808080" stroke-width="1.4" fill="none" />
</g>
<rect x="328.5" y="220.5" width="105" height="52.5" fill="none" stroke="#ed1c24" stroke-width="5" />
<rect x="330.5" y="300.5" width="101" height="51" fill="none" stroke="#ed1c24" stroke-width="5" />
<rect x="660.75" y="223.25" width="104.5" height="48.0" fill="none" stroke="#ed1c24" stroke-width="5.5" />
<rect x="660.75" y="602.75" width="104.5" height="49.5" fill="none" stroke="#ed1c24" stroke-width="5.5" />
<text transform="translate(473 242.5) scale(1.06 1)" font-size="18" fill="#ed1c24" font-weight="bold" stroke="#ed1c24" stroke-width="0.25">2.6</text>
<text transform="translate(442 319.5) scale(1.06 1)" font-size="18" fill="#ed1c24" font-weight="bold" stroke="#ed1c24" stroke-width="0.25">2.2</text>
<rect x="1030" y="53" width="517" height="878" fill="#f0f0f0" />
<rect x="1041.4" y="54.2" width="518.5999999999999" height="20.7" fill="#d9d9d9" stroke="#bdbdbd" stroke-width="1" />
<text x="1046.4" y="70.4" font-size="12" fill="#000" textLength="119.5" lengthAdjust="spacingAndGlyphs" >DPLL_LP1 - Parameters</text>
<rect x="1513.8" y="60.6" width="5.3" height="5.2" fill="none" stroke="#222" stroke-width="1.2" />
<line x1="1513.1999999999998" y1="61.0" x2="1519.6999999999998" y2="61.0" stroke="#222" stroke-width="1.6"/>
<rect x="1511.6999999999998" y="63.800000000000004" width="5.3" height="5.2" fill="#e6e6e6" stroke="#222" stroke-width="1.2" />
<line x1="1511.1" y1="64.2" x2="1517.6" y2="64.2" stroke="#222" stroke-width="1.6"/>
<path d="M1532.2 60.75 L1539.8 68.35 M1539.8 60.75 L1532.2 68.35" stroke="#2a2a2a" stroke-width="1.9" fill="none" />
<rect x="1041.4" y="74.9" width="505.5999999999999" height="30.2" fill="#f0f0f0" />
<rect x="1043.5" y="79.7" width="403.70000000000005" height="22.299999999999997" fill="#ffffff" stroke="#7a7a7a" stroke-width="1.1" />
<text x="1046.5" y="96.0" font-size="12" fill="#858585" textLength="88" lengthAdjust="spacingAndGlyphs" >Enter filter text...</text>
<path d="M1427.2 97.35 L1433.2 85.35 L1439.2 85.35 L1433.2 97.35 Z" stroke="#b49a78" stroke-width="1" fill="#efe3d3" />
<line x1="1433.2" y1="97.35" x2="1442.2" y2="97.35" stroke="#b49a78" stroke-width="1"/>
<path d="M1456.4 86.85 A4.9 4.9 0 1 0 1462.3500000000001 87.1" stroke="#2f6fd6" stroke-width="2.8" fill="none" />
<path d="M1459.6000000000001 84.25 L1465.6000000000001 83.44999999999999 L1465.0 89.44999999999999 Z" stroke="none" stroke-width="1" fill="#2f6fd6" />
<line x1="1473.7" y1="82.2" x2="1473.7" y2="100.5" stroke="#d0d0d0" stroke-width="1"/>
<path d="M1480.7 84.35 L1495.7 84.35 L1489.7 91.35 L1489.7 97.85 L1486.7 95.85 L1486.7 91.35 Z" stroke="#555" stroke-width="1" fill="#9a9a9a" />
<path d="M1487.8 91.85 L1487.8 95.44999999999999" stroke="#ffffff" stroke-width="0.9" fill="none" />
<rect x="1505.2" y="84.35" width="10" height="10" fill="#eaf2fb" stroke="#9aa9c0" stroke-width="1" />
<rect x="1508.2" y="87.35" width="10" height="10" fill="#f4f8fd" stroke="#7f8fa8" stroke-width="1.2" />
<line x1="1510.2" y1="92.35" x2="1516.2" y2="92.35" stroke="#1d4f8a" stroke-width="1.6"/>
<rect x="1528.2" y="84.35" width="10" height="10" fill="#eaf2fb" stroke="#9aa9c0" stroke-width="1" />
<rect x="1531.2" y="87.35" width="10" height="10" fill="#f4f8fd" stroke="#7f8fa8" stroke-width="1.2" />
<line x1="1533.2" y1="92.35" x2="1539.2" y2="92.35" stroke="#1d4f8a" stroke-width="1.6"/>
<line x1="1536.2" y1="89.35" x2="1536.2" y2="95.35" stroke="#1d4f8a" stroke-width="1.6"/>
<rect x="1041.4" y="105.1" width="505.5999999999999" height="367" fill="#ffffff" />
<line x1="1041.4" y1="105.6" x2="1547" y2="105.6" stroke="#828790" stroke-width="1.2"/>
<line x1="1042.0" y1="105.1" x2="1042.0" y2="472" stroke="#828790" stroke-width="1.2"/>
<line x1="1265.4" y1="106" x2="1265.4" y2="130" stroke="#e3e3e3" stroke-width="1"/>
<text x="1046.5" y="123" font-size="12" fill="#000" textLength="30" lengthAdjust="spacingAndGlyphs" >Name</text>
<text x="1270.1" y="123" font-size="12" fill="#000" textLength="29" lengthAdjust="spacingAndGlyphs" >Value</text>
<rect x="1042" y="148.3" width="505" height="39.5" fill="#f3f3f3" />
<path d="M1048 137.0 L1052 141.0 L1056 137.0" stroke="#333" stroke-width="1.1" fill="none" />
<text x="1065" y="144" font-size="12" fill="#000" textLength="48" lengthAdjust="spacingAndGlyphs" >Overview</text>
<circle cx="1093" cy="168.5" r="7.3" fill="none" stroke="#7a7a7a" stroke-width="1.1"/>
<path d="M1090.2 166.1 Q1090.4 163.3 1093 163.3 Q1096 163.3 1096 166.0 Q1096 167.9 1093.6 169.1 Q1093 169.7 1093 170.9" stroke="#6a6a6a" stroke-width="1.6" fill="none" />
<circle cx="1093" cy="173.1" r="1" fill="#6a6a6a"/>
<text x="1107.3" y="173" font-size="12" fill="#000" textLength="100" lengthAdjust="spacingAndGlyphs" >Configuration Help</text>
<text x="1270" y="173" font-size="12" fill="#1a0dff" textLength="135" lengthAdjust="spacingAndGlyphs" >Open PLL Documentation</text>
<line x1="1270" y1="175.5" x2="1405" y2="175.5" stroke="#1a0dff" stroke-width="1"/>
<path d="M1048 194.3 L1052 198.3 L1056 194.3" stroke="#333" stroke-width="1.1" fill="none" />
<text x="1065" y="201.5" font-size="12" fill="#000" textLength="40" lengthAdjust="spacingAndGlyphs" >General</text>
<rect x="1042" y="206.3" width="505" height="20.0" fill="#f3f3f3" />
<circle cx="1093" cy="216.3" r="7.3" fill="none" stroke="#7a7a7a" stroke-width="1.1"/>
<path d="M1090.2 213.9 Q1090.4 211.10000000000002 1093 211.10000000000002 Q1096 211.10000000000002 1096 213.8 Q1096 215.70000000000002 1093.6 216.9 Q1093 217.5 1093 218.70000000000002" stroke="#6a6a6a" stroke-width="1.6" fill="none" />
<circle cx="1093" cy="220.9" r="1" fill="#6a6a6a"/>
<text x="1107.3" y="221.3" font-size="12" fill="#000" textLength="94" lengthAdjust="spacingAndGlyphs" >Source Frequency</text>
<path d="M1272.5 214.60000000000002 L1272.5 213.3 A3.9 3.9 0 0 1 1280.3 213.3 L1280.3 214.60000000000002" stroke="#6e6e6e" stroke-width="2.5" fill="none" />
<path d="M1272.5 214.60000000000002 L1272.5 213.3 A3.9 3.9 0 0 1 1280.3 213.3 L1280.3 214.60000000000002" stroke="#ffffff" stroke-width="0.8" fill="none" />
<rect x="1270.6" y="214.60000000000002" width="11.6" height="8.4" rx="1.2" fill="#ffffff" stroke="#6e6e6e" stroke-width="1.1"/>
<line x1="1271.2" y1="222.8" x2="1281.6" y2="222.8" stroke="#6e6e6e" stroke-width="1.2"/>
<text transform="translate(1291.5 221.3) scale(0.95 1)" font-size="12" fill="#000" >17.203 MHz</text>
<rect x="1042" y="226.3" width="505" height="20.0" fill="#ffffff" />
<circle cx="1093" cy="236.3" r="7.3" fill="none" stroke="#7a7a7a" stroke-width="1.1"/>
<path d="M1090.2 233.9 Q1090.4 231.10000000000002 1093 231.10000000000002 Q1096 231.10000000000002 1096 233.8 Q1096 235.70000000000002 1093.6 236.9 Q1093 237.5 1093 238.70000000000002" stroke="#6a6a6a" stroke-width="1.6" fill="none" />
<circle cx="1093" cy="240.9" r="1" fill="#6a6a6a"/>
<text x="1107.3" y="241.3" font-size="12" fill="#000" textLength="113" lengthAdjust="spacingAndGlyphs" >Low Frequency Mode</text>
<path d="M1272.5 234.60000000000002 L1272.5 233.3 A3.9 3.9 0 0 1 1280.3 233.3 L1280.3 234.60000000000002" stroke="#6e6e6e" stroke-width="2.5" fill="none" />
<path d="M1272.5 234.60000000000002 L1272.5 233.3 A3.9 3.9 0 0 1 1280.3 233.3 L1280.3 234.60000000000002" stroke="#ffffff" stroke-width="0.8" fill="none" />
<rect x="1270.6" y="234.60000000000002" width="11.6" height="8.4" rx="1.2" fill="#ffffff" stroke="#6e6e6e" stroke-width="1.1"/>
<line x1="1271.2" y1="242.8" x2="1281.6" y2="242.8" stroke="#6e6e6e" stroke-width="1.2"/>
<text transform="translate(1291.5 241.3) scale(0.95 1)" font-size="12" fill="#000" >false</text>
<rect x="1042" y="246.3" width="505" height="20.69999999999999" fill="#f3f3f3" />
<circle cx="1093" cy="256.65000000000003" r="7.3" fill="none" stroke="#7a7a7a" stroke-width="1.1"/>
<path d="M1090.2 254.25000000000003 Q1090.4 251.45000000000005 1093 251.45000000000005 Q1096 251.45000000000005 1096 254.15000000000003 Q1096 256.05 1093.6 257.25000000000006 Q1093 257.85 1093 259.05" stroke="#6a6a6a" stroke-width="1.6" fill="none" />
<circle cx="1093" cy="261.25000000000006" r="1" fill="#6a6a6a"/>
<text x="1107.3" y="261.65000000000003" font-size="12" fill="#000" textLength="72" lengthAdjust="spacingAndGlyphs" >Configuration</text>
<rect x="1266.5" y="246.5" width="280" height="20.3" fill="#fcfcfc" stroke="#d0d0d0" stroke-width="1" />
<text transform="translate(1270 261.65000000000003) scale(0.95 1)" font-size="12" fill="#000" >Automatic</text>
<path d="M1531.7 253.85000000000002 L1537.2 259.35 L1542.7 253.85000000000002" stroke="#444" stroke-width="1.1" fill="none" />
<rect x="1042" y="267.0" width="505" height="21.19999999999999" fill="#ffffff" />
<circle cx="1093" cy="277.6" r="7.3" fill="none" stroke="#7a7a7a" stroke-width="1.1"/>
<path d="M1090.2 275.20000000000005 Q1090.4 272.40000000000003 1093 272.40000000000003 Q1096 272.40000000000003 1096 275.1 Q1096 277.0 1093.6 278.20000000000005 Q1093 278.8 1093 280.0" stroke="#6a6a6a" stroke-width="1.6" fill="none" />
<circle cx="1093" cy="282.20000000000005" r="1" fill="#6a6a6a"/>
<text x="1107.3" y="282.6" font-size="12" fill="#000" textLength="132" lengthAdjust="spacingAndGlyphs" >Desired Frequency (MHz)</text>
<text transform="translate(1268.5 282.6) scale(0.95 1)" font-size="12" fill="#000" >200.000</text>
<rect x="1042" y="288.2" width="505" height="19.600000000000023" fill="#f3f3f3" />
<circle cx="1093" cy="298.0" r="7.3" fill="none" stroke="#7a7a7a" stroke-width="1.1"/>
<path d="M1090.2 295.6 Q1090.4 292.8 1093 292.8 Q1096 292.8 1096 295.5 Q1096 297.4 1093.6 298.6 Q1093 299.2 1093 300.4" stroke="#6a6a6a" stroke-width="1.6" fill="none" />
<circle cx="1093" cy="302.6" r="1" fill="#6a6a6a"/>
<text x="1107.3" y="303.0" font-size="12" fill="#000" textLength="66" lengthAdjust="spacingAndGlyphs" >Optimization</text>
<path d="M1272.5 296.3 L1272.5 295.0 A3.9 3.9 0 0 1 1280.3 295.0 L1280.3 296.3" stroke="#6e6e6e" stroke-width="2.5" fill="none" />
<path d="M1272.5 296.3 L1272.5 295.0 A3.9 3.9 0 0 1 1280.3 295.0 L1280.3 296.3" stroke="#ffffff" stroke-width="0.8" fill="none" />
<rect x="1270.6" y="296.3" width="11.6" height="8.4" rx="1.2" fill="#ffffff" stroke="#6e6e6e" stroke-width="1.1"/>
<line x1="1271.2" y1="304.5" x2="1281.6" y2="304.5" stroke="#6e6e6e" stroke-width="1.2"/>
<text transform="translate(1291.5 303.0) scale(0.95 1)" font-size="12" fill="#000" >Min Power</text>
<rect x="1042" y="307.8" width="505" height="20.0" fill="#ffffff" />
<circle cx="1093" cy="317.8" r="7.3" fill="none" stroke="#7a7a7a" stroke-width="1.1"/>
<path d="M1090.2 315.40000000000003 Q1090.4 312.6 1093 312.6 Q1096 312.6 1096 315.3 Q1096 317.2 1093.6 318.40000000000003 Q1093 319.0 1093 320.2" stroke="#6a6a6a" stroke-width="1.6" fill="none" />
<circle cx="1093" cy="322.40000000000003" r="1" fill="#6a6a6a"/>
<text x="1107.3" y="322.8" font-size="12" fill="#000" textLength="96" lengthAdjust="spacingAndGlyphs" >Feedback (16-200)</text>
<path d="M1272.5 316.1 L1272.5 314.8 A3.9 3.9 0 0 1 1280.3 314.8 L1280.3 316.1" stroke="#6e6e6e" stroke-width="2.5" fill="none" />
<path d="M1272.5 316.1 L1272.5 314.8 A3.9 3.9 0 0 1 1280.3 314.8 L1280.3 316.1" stroke="#ffffff" stroke-width="0.8" fill="none" />
<rect x="1270.6" y="316.1" width="11.6" height="8.4" rx="1.2" fill="#ffffff" stroke="#6e6e6e" stroke-width="1.1"/>
<line x1="1271.2" y1="324.3" x2="1281.6" y2="324.3" stroke="#6e6e6e" stroke-width="1.2"/>
<text transform="translate(1291.5 322.8) scale(0.95 1)" font-size="12" fill="#000" >34</text>
<rect x="1042" y="327.8" width="505" height="20.0" fill="#f3f3f3" />
<circle cx="1093" cy="337.8" r="7.3" fill="none" stroke="#7a7a7a" stroke-width="1.1"/>
<path d="M1090.2 335.40000000000003 Q1090.4 332.6 1093 332.6 Q1096 332.6 1096 335.3 Q1096 337.2 1093.6 338.40000000000003 Q1093 339.0 1093 340.2" stroke="#6a6a6a" stroke-width="1.6" fill="none" />
<circle cx="1093" cy="342.40000000000003" r="1" fill="#6a6a6a"/>
<text x="1107.3" y="342.8" font-size="12" fill="#000" textLength="82" lengthAdjust="spacingAndGlyphs" >Reference (1-16)</text>
<path d="M1272.5 336.1 L1272.5 334.8 A3.9 3.9 0 0 1 1280.3 334.8 L1280.3 336.1" stroke="#6e6e6e" stroke-width="2.5" fill="none" />
<path d="M1272.5 336.1 L1272.5 334.8 A3.9 3.9 0 0 1 1280.3 334.8 L1280.3 336.1" stroke="#ffffff" stroke-width="0.8" fill="none" />
<rect x="1270.6" y="336.1" width="11.6" height="8.4" rx="1.2" fill="#ffffff" stroke="#6e6e6e" stroke-width="1.1"/>
<line x1="1271.2" y1="344.3" x2="1281.6" y2="344.3" stroke="#6e6e6e" stroke-width="1.2"/>
<text transform="translate(1291.5 342.8) scale(0.95 1)" font-size="12" fill="#000" >3</text>
<rect x="1042" y="347.8" width="505" height="20.0" fill="#ffffff" />
<circle cx="1093" cy="357.8" r="7.3" fill="none" stroke="#7a7a7a" stroke-width="1.1"/>
<path d="M1090.2 355.40000000000003 Q1090.4 352.6 1093 352.6 Q1096 352.6 1096 355.3 Q1096 357.2 1093.6 358.40000000000003 Q1093 359.0 1093 360.2" stroke="#6a6a6a" stroke-width="1.6" fill="none" />
<circle cx="1093" cy="362.40000000000003" r="1" fill="#6a6a6a"/>
<text x="1107.3" y="362.8" font-size="12" fill="#000" textLength="72" lengthAdjust="spacingAndGlyphs" >Output (1-16)</text>
<path d="M1272.5 356.1 L1272.5 354.8 A3.9 3.9 0 0 1 1280.3 354.8 L1280.3 356.1" stroke="#6e6e6e" stroke-width="2.5" fill="none" />
<path d="M1272.5 356.1 L1272.5 354.8 A3.9 3.9 0 0 1 1280.3 354.8 L1280.3 356.1" stroke="#ffffff" stroke-width="0.8" fill="none" />
<rect x="1270.6" y="356.1" width="11.6" height="8.4" rx="1.2" fill="#ffffff" stroke="#6e6e6e" stroke-width="1.1"/>
<line x1="1271.2" y1="364.3" x2="1281.6" y2="364.3" stroke="#6e6e6e" stroke-width="1.2"/>
<text transform="translate(1291.5 362.8) scale(0.95 1)" font-size="12" fill="#000" >1</text>
<rect x="1042" y="367.8" width="505" height="20.0" fill="#f3f3f3" />
<circle cx="1093" cy="377.8" r="7.3" fill="none" stroke="#7a7a7a" stroke-width="1.1"/>
<path d="M1090.2 375.40000000000003 Q1090.4 372.6 1093 372.6 Q1096 372.6 1096 375.3 Q1096 377.2 1093.6 378.40000000000003 Q1093 379.0 1093 380.2" stroke="#6a6a6a" stroke-width="1.6" fill="none" />
<circle cx="1093" cy="382.40000000000003" r="1" fill="#6a6a6a"/>
<text x="1107.3" y="382.8" font-size="12" fill="#000" textLength="155" lengthAdjust="spacingAndGlyphs" >Fraction divider (0-16777215)</text>
<path d="M1272.5 376.1 L1272.5 374.8 A3.9 3.9 0 0 1 1280.3 374.8 L1280.3 376.1" stroke="#6e6e6e" stroke-width="2.5" fill="none" />
<path d="M1272.5 376.1 L1272.5 374.8 A3.9 3.9 0 0 1 1280.3 374.8 L1280.3 376.1" stroke="#ffffff" stroke-width="0.8" fill="none" />
<rect x="1270.6" y="376.1" width="11.6" height="8.4" rx="1.2" fill="#ffffff" stroke="#6e6e6e" stroke-width="1.1"/>
<line x1="1271.2" y1="384.3" x2="1281.6" y2="384.3" stroke="#6e6e6e" stroke-width="1.2"/>
<text transform="translate(1291.5 382.8) scale(0.95 1)" font-size="12" fill="#000" >14717513</text>
<rect x="1042" y="387.8" width="505" height="20.0" fill="#ffffff" />
<circle cx="1093" cy="397.8" r="7.3" fill="none" stroke="#7a7a7a" stroke-width="1.1"/>
<path d="M1090.2 395.40000000000003 Q1090.4 392.6 1093 392.6 Q1096 392.6 1096 395.3 Q1096 397.2 1093.6 398.40000000000003 Q1093 399.0 1093 400.2" stroke="#6a6a6a" stroke-width="1.6" fill="none" />
<circle cx="1093" cy="402.40000000000003" r="1" fill="#6a6a6a"/>
<text x="1107.3" y="402.8" font-size="12" fill="#000" textLength="98" lengthAdjust="spacingAndGlyphs" >DCO Mode Enable</text>
<path d="M1272.5 396.1 L1272.5 394.8 A3.9 3.9 0 0 1 1280.3 394.8 L1280.3 396.1" stroke="#6e6e6e" stroke-width="2.5" fill="none" />
<path d="M1272.5 396.1 L1272.5 394.8 A3.9 3.9 0 0 1 1280.3 394.8 L1280.3 396.1" stroke="#ffffff" stroke-width="0.8" fill="none" />
<rect x="1270.6" y="396.1" width="11.6" height="8.4" rx="1.2" fill="#ffffff" stroke="#6e6e6e" stroke-width="1.1"/>
<line x1="1271.2" y1="404.3" x2="1281.6" y2="404.3" stroke="#6e6e6e" stroke-width="1.2"/>
<text transform="translate(1291.5 402.8) scale(0.95 1)" font-size="12" fill="#000" >false</text>
<rect x="1042" y="407.8" width="505" height="20.0" fill="#f3f3f3" />
<circle cx="1093" cy="417.8" r="7.3" fill="none" stroke="#7a7a7a" stroke-width="1.1"/>
<path d="M1090.2 415.40000000000003 Q1090.4 412.6 1093 412.6 Q1096 412.6 1096 415.3 Q1096 417.2 1093.6 418.40000000000003 Q1093 419.0 1093 420.2" stroke="#6a6a6a" stroke-width="1.6" fill="none" />
<circle cx="1093" cy="422.40000000000003" r="1" fill="#6a6a6a"/>
<text x="1107.3" y="422.8" font-size="12" fill="#000" textLength="78" lengthAdjust="spacingAndGlyphs" >Fraction Dither</text>
<path d="M1272.5 416.1 L1272.5 414.8 A3.9 3.9 0 0 1 1280.3 414.8 L1280.3 416.1" stroke="#6e6e6e" stroke-width="2.5" fill="none" />
<path d="M1272.5 416.1 L1272.5 414.8 A3.9 3.9 0 0 1 1280.3 414.8 L1280.3 416.1" stroke="#ffffff" stroke-width="0.8" fill="none" />
<rect x="1270.6" y="416.1" width="11.6" height="8.4" rx="1.2" fill="#ffffff" stroke="#6e6e6e" stroke-width="1.1"/>
<line x1="1271.2" y1="424.3" x2="1281.6" y2="424.3" stroke="#6e6e6e" stroke-width="1.2"/>
<text transform="translate(1291.5 422.8) scale(0.95 1)" font-size="12" fill="#000" >false</text>
<rect x="1042" y="427.8" width="505" height="20.0" fill="#ffffff" />
<circle cx="1093" cy="437.8" r="7.3" fill="none" stroke="#7a7a7a" stroke-width="1.1"/>
<path d="M1090.2 435.40000000000003 Q1090.4 432.6 1093 432.6 Q1096 432.6 1096 435.3 Q1096 437.2 1093.6 438.40000000000003 Q1093 439.0 1093 440.2" stroke="#6a6a6a" stroke-width="1.6" fill="none" />
<circle cx="1093" cy="442.40000000000003" r="1" fill="#6a6a6a"/>
<text x="1107.3" y="442.8" font-size="12" fill="#000" textLength="81" lengthAdjust="spacingAndGlyphs" >Fraction Enable</text>
<path d="M1272.5 436.1 L1272.5 434.8 A3.9 3.9 0 0 1 1280.3 434.8 L1280.3 436.1" stroke="#6e6e6e" stroke-width="2.5" fill="none" />
<path d="M1272.5 436.1 L1272.5 434.8 A3.9 3.9 0 0 1 1280.3 434.8 L1280.3 436.1" stroke="#ffffff" stroke-width="0.8" fill="none" />
<rect x="1270.6" y="436.1" width="11.6" height="8.4" rx="1.2" fill="#ffffff" stroke="#6e6e6e" stroke-width="1.1"/>
<line x1="1271.2" y1="444.3" x2="1281.6" y2="444.3" stroke="#6e6e6e" stroke-width="1.2"/>
<text transform="translate(1291.5 442.8) scale(0.95 1)" font-size="12" fill="#000" >true</text>
<rect x="1042" y="447.8" width="505" height="19.69999999999999" fill="#f3f3f3" />
<rect x="1082.5" y="447.8" width="464.5" height="19.69999999999999" fill="#d0d0d0" />
<circle cx="1093" cy="457.65000000000003" r="7.3" fill="#b9d9f4" stroke="#5f86a8" stroke-width="1.2"/>
<path d="M1090.2 455.25000000000006 Q1090.4 452.45000000000005 1093 452.45000000000005 Q1096 452.45000000000005 1096 455.15000000000003 Q1096 457.05 1093.6 458.25000000000006 Q1093 458.85 1093 460.05" stroke="#5f7f99" stroke-width="1.6" fill="none" />
<circle cx="1093" cy="462.25000000000006" r="1" fill="#5f7f99"/>
<text x="1107.3" y="462.65000000000003" font-size="12" fill="#000" textLength="92" lengthAdjust="spacingAndGlyphs" >Actual Frequency</text>
<path d="M1272.5 455.95000000000005 L1272.5 454.65000000000003 A3.9 3.9 0 0 1 1280.3 454.65000000000003 L1280.3 455.95000000000005" stroke="#5f86a8" stroke-width="2.5" fill="none" />
<path d="M1272.5 455.95000000000005 L1272.5 454.65000000000003 A3.9 3.9 0 0 1 1280.3 454.65000000000003 L1280.3 455.95000000000005" stroke="#b9d9f4" stroke-width="0.8" fill="none" />
<rect x="1270.6" y="455.95000000000005" width="11.6" height="8.4" rx="1.2" fill="#b9d9f4" stroke="#5f86a8" stroke-width="1.1"/>
<line x1="1271.2" y1="464.15000000000003" x2="1281.6" y2="464.15000000000003" stroke="#5f86a8" stroke-width="1.2"/>
<text transform="translate(1291.5 462.65000000000003) scale(0.95 1)" font-size="12" fill="#000" >200 MHz</text>
<line x1="1042.0" y1="105.1" x2="1042.0" y2="472" stroke="#828790" stroke-width="1.2"/>
<rect x="1030" y="472" width="517" height="5.6" fill="#ffffff" />
<rect x="1047.4" y="477.6" width="512.5999999999999" height="20.7" fill="#d9d9d9" stroke="#bdbdbd" stroke-width="1" />
<text x="1052.4" y="493.8" font-size="12" fill="#000" textLength="115" lengthAdjust="spacingAndGlyphs" >DPLL_HP - Parameters</text>
<rect x="1519.3" y="484.0" width="5.3" height="5.2" fill="none" stroke="#222" stroke-width="1.2" />
<line x1="1518.6999999999998" y1="484.40000000000003" x2="1525.1999999999998" y2="484.40000000000003" stroke="#222" stroke-width="1.6"/>
<rect x="1517.1999999999998" y="487.20000000000005" width="5.3" height="5.2" fill="#e6e6e6" stroke="#222" stroke-width="1.2" />
<line x1="1516.6" y1="487.6" x2="1523.1" y2="487.6" stroke="#222" stroke-width="1.6"/>
<path d="M1537.7 484.15000000000003 L1545.3 491.75000000000006 M1545.3 484.15000000000003 L1537.7 491.75000000000006" stroke="#2a2a2a" stroke-width="1.9" fill="none" />
<rect x="1047.4" y="498.3" width="499.5999999999999" height="30" fill="#f0f0f0" />
<rect x="1049.7" y="502.8" width="403.5" height="21.999999999999943" fill="#ffffff" stroke="#7a7a7a" stroke-width="1.1" />
<text x="1052.7" y="519.1" font-size="12" fill="#858585" textLength="88" lengthAdjust="spacingAndGlyphs" >Enter filter text...</text>
<path d="M1433.2 520.3 L1439.2 508.29999999999995 L1445.2 508.29999999999995 L1439.2 520.3 Z" stroke="#b49a78" stroke-width="1" fill="#efe3d3" />
<line x1="1439.2" y1="520.3" x2="1448.2" y2="520.3" stroke="#b49a78" stroke-width="1"/>
<path d="M1462.4 509.79999999999995 A4.9 4.9 0 1 0 1468.3500000000001 510.04999999999995" stroke="#2f6fd6" stroke-width="2.8" fill="none" />
<path d="M1465.6000000000001 507.19999999999993 L1471.6000000000001 506.4 L1471.0 512.4 Z" stroke="none" stroke-width="1" fill="#2f6fd6" />
<line x1="1479.7" y1="505.3" x2="1479.7" y2="523.3" stroke="#d0d0d0" stroke-width="1"/>
<path d="M1486.7 507.29999999999995 L1501.7 507.29999999999995 L1495.7 514.3 L1495.7 520.8 L1492.7 518.8 L1492.7 514.3 Z" stroke="#555" stroke-width="1" fill="#9a9a9a" />
<path d="M1493.8 514.8 L1493.8 518.4" stroke="#ffffff" stroke-width="0.9" fill="none" />
<rect x="1511.2" y="507.29999999999995" width="10" height="10" fill="#eaf2fb" stroke="#9aa9c0" stroke-width="1" />
<rect x="1514.2" y="510.29999999999995" width="10" height="10" fill="#f4f8fd" stroke="#7f8fa8" stroke-width="1.2" />
<line x1="1516.2" y1="515.3" x2="1522.2" y2="515.3" stroke="#1d4f8a" stroke-width="1.6"/>
<rect x="1534.2" y="507.29999999999995" width="10" height="10" fill="#eaf2fb" stroke="#9aa9c0" stroke-width="1" />
<rect x="1537.2" y="510.29999999999995" width="10" height="10" fill="#f4f8fd" stroke="#7f8fa8" stroke-width="1.2" />
<line x1="1539.2" y1="515.3" x2="1545.2" y2="515.3" stroke="#1d4f8a" stroke-width="1.6"/>
<line x1="1542.2" y1="512.3" x2="1542.2" y2="518.3" stroke="#1d4f8a" stroke-width="1.6"/>
<rect x="1047.4" y="528.2" width="499.5999999999999" height="374" fill="#ffffff" />
<line x1="1047.4" y1="528.7" x2="1547" y2="528.7" stroke="#828790" stroke-width="1.2"/>
<line x1="1048.0" y1="528.2" x2="1048.0" y2="902" stroke="#828790" stroke-width="1.2"/>
<line x1="1284.7" y1="529" x2="1284.7" y2="553" stroke="#e3e3e3" stroke-width="1"/>
<text x="1052.7" y="546" font-size="12" fill="#000" textLength="30" lengthAdjust="spacingAndGlyphs" >Name</text>
<text x="1289" y="546" font-size="12" fill="#000" textLength="29" lengthAdjust="spacingAndGlyphs" >Value</text>
<rect x="1048" y="571" width="499" height="40" fill="#f3f3f3" />
<path d="M1054 559.5 L1058 563.5 L1062 559.5" stroke="#333" stroke-width="1.1" fill="none" />
<text x="1071" y="566.5" font-size="12" fill="#000" textLength="48" lengthAdjust="spacingAndGlyphs" >Overview</text>
<circle cx="1098.8" cy="591" r="7.3" fill="none" stroke="#7a7a7a" stroke-width="1.1"/>
<path d="M1096.0 588.6 Q1096.2 585.8 1098.8 585.8 Q1101.8 585.8 1101.8 588.5 Q1101.8 590.4 1099.3999999999999 591.6 Q1098.8 592.2 1098.8 593.4" stroke="#6a6a6a" stroke-width="1.6" fill="none" />
<circle cx="1098.8" cy="595.6" r="1" fill="#6a6a6a"/>
<text x="1113" y="595.5" font-size="12" fill="#000" textLength="100" lengthAdjust="spacingAndGlyphs" >Configuration Help</text>
<text x="1289" y="595.5" font-size="12" fill="#1a0dff" textLength="135" lengthAdjust="spacingAndGlyphs" >Open PLL Documentation</text>
<line x1="1289" y1="598" x2="1424" y2="598" stroke="#1a0dff" stroke-width="1"/>
<path d="M1054 617.0 L1058 621.0 L1062 617.0" stroke="#333" stroke-width="1.1" fill="none" />
<text x="1071" y="624" font-size="12" fill="#000" textLength="40" lengthAdjust="spacingAndGlyphs" >General</text>
<rect x="1048" y="628.8" width="499" height="20.100000000000023" fill="#f3f3f3" />
<circle cx="1098.8" cy="638.8499999999999" r="7.3" fill="none" stroke="#7a7a7a" stroke-width="1.1"/>
<path d="M1096.0 636.4499999999999 Q1096.2 633.6499999999999 1098.8 633.6499999999999 Q1101.8 633.6499999999999 1101.8 636.3499999999999 Q1101.8 638.2499999999999 1099.3999999999999 639.4499999999999 Q1098.8 640.05 1098.8 641.2499999999999" stroke="#6a6a6a" stroke-width="1.6" fill="none" />
<circle cx="1098.8" cy="643.4499999999999" r="1" fill="#6a6a6a"/>
<text x="1113" y="643.8499999999999" font-size="12" fill="#000" textLength="94" lengthAdjust="spacingAndGlyphs" >Source Frequency</text>
<path d="M1291.9 637.1499999999999 L1291.9 635.8499999999999 A3.9 3.9 0 0 1 1299.7 635.8499999999999 L1299.7 637.1499999999999" stroke="#6e6e6e" stroke-width="2.5" fill="none" />
<path d="M1291.9 637.1499999999999 L1291.9 635.8499999999999 A3.9 3.9 0 0 1 1299.7 635.8499999999999 L1299.7 637.1499999999999" stroke="#ffffff" stroke-width="0.8" fill="none" />
<rect x="1290.0" y="637.1499999999999" width="11.6" height="8.4" rx="1.2" fill="#ffffff" stroke="#6e6e6e" stroke-width="1.1"/>
<line x1="1290.6000000000001" y1="645.3499999999999" x2="1301.0" y2="645.3499999999999" stroke="#6e6e6e" stroke-width="1.2"/>
<text transform="translate(1310 643.8499999999999) scale(0.95 1)" font-size="12" fill="#000" >50 MHz ± 1%</text>
<rect x="1048" y="648.9" width="499" height="20.0" fill="#ffffff" />
<circle cx="1098.8" cy="658.9" r="7.3" fill="none" stroke="#7a7a7a" stroke-width="1.1"/>
<path d="M1096.0 656.5 Q1096.2 653.6999999999999 1098.8 653.6999999999999 Q1101.8 653.6999999999999 1101.8 656.4 Q1101.8 658.3 1099.3999999999999 659.5 Q1098.8 660.1 1098.8 661.3" stroke="#6a6a6a" stroke-width="1.6" fill="none" />
<circle cx="1098.8" cy="663.5" r="1" fill="#6a6a6a"/>
<text x="1113" y="663.9" font-size="12" fill="#000" textLength="113" lengthAdjust="spacingAndGlyphs" >Low Frequency Mode</text>
<path d="M1291.9 657.1999999999999 L1291.9 655.9 A3.9 3.9 0 0 1 1299.7 655.9 L1299.7 657.1999999999999" stroke="#6e6e6e" stroke-width="2.5" fill="none" />
<path d="M1291.9 657.1999999999999 L1291.9 655.9 A3.9 3.9 0 0 1 1299.7 655.9 L1299.7 657.1999999999999" stroke="#ffffff" stroke-width="0.8" fill="none" />
<rect x="1290.0" y="657.1999999999999" width="11.6" height="8.4" rx="1.2" fill="#ffffff" stroke="#6e6e6e" stroke-width="1.1"/>
<line x1="1290.6000000000001" y1="665.4" x2="1301.0" y2="665.4" stroke="#6e6e6e" stroke-width="1.2"/>
<text transform="translate(1310 663.9) scale(0.95 1)" font-size="12" fill="#000" >false</text>
<rect x="1048" y="668.9" width="499" height="20.299999999999955" fill="#f3f3f3" />
<circle cx="1098.8" cy="679.05" r="7.3" fill="none" stroke="#7a7a7a" stroke-width="1.1"/>
<path d="M1096.0 676.65 Q1096.2 673.8499999999999 1098.8 673.8499999999999 Q1101.8 673.8499999999999 1101.8 676.55 Q1101.8 678.4499999999999 1099.3999999999999 679.65 Q1098.8 680.25 1098.8 681.4499999999999" stroke="#6a6a6a" stroke-width="1.6" fill="none" />
<circle cx="1098.8" cy="683.65" r="1" fill="#6a6a6a"/>
<text x="1113" y="684.05" font-size="12" fill="#000" textLength="72" lengthAdjust="spacingAndGlyphs" >Configuration</text>
<rect x="1285.5" y="669.1" width="267" height="19.900000000000002" fill="#fcfcfc" stroke="#d0d0d0" stroke-width="1" />
<text transform="translate(1289 684.05) scale(0.95 1)" font-size="12" fill="#000" >Automatic</text>
<path d="M1537.7 676.25 L1543.2 681.75 L1548.7 676.25" stroke="#444" stroke-width="1.1" fill="none" />
<rect x="1048" y="689.1999999999999" width="499" height="21.899999999999977" fill="#ffffff" />
<circle cx="1098.8" cy="700.15" r="7.3" fill="none" stroke="#7a7a7a" stroke-width="1.1"/>
<path d="M1096.0 697.75 Q1096.2 694.9499999999999 1098.8 694.9499999999999 Q1101.8 694.9499999999999 1101.8 697.65 Q1101.8 699.55 1099.3999999999999 700.75 Q1098.8 701.35 1098.8 702.55" stroke="#6a6a6a" stroke-width="1.6" fill="none" />
<circle cx="1098.8" cy="704.75" r="1" fill="#6a6a6a"/>
<text x="1113" y="705.15" font-size="12" fill="#000" textLength="132" lengthAdjust="spacingAndGlyphs" >Desired Frequency (MHz)</text>
<text transform="translate(1287.5 705.15) scale(0.95 1)" font-size="12" fill="#000" >400.000</text>
<rect x="1048" y="711.0999999999999" width="499" height="19.700000000000045" fill="#f3f3f3" />
<circle cx="1098.8" cy="720.9499999999999" r="7.3" fill="none" stroke="#7a7a7a" stroke-width="1.1"/>
<path d="M1096.0 718.55 Q1096.2 715.7499999999999 1098.8 715.7499999999999 Q1101.8 715.7499999999999 1101.8 718.4499999999999 Q1101.8 720.3499999999999 1099.3999999999999 721.55 Q1098.8 722.15 1098.8 723.3499999999999" stroke="#6a6a6a" stroke-width="1.6" fill="none" />
<circle cx="1098.8" cy="725.55" r="1" fill="#6a6a6a"/>
<text x="1113" y="725.9499999999999" font-size="12" fill="#000" textLength="66" lengthAdjust="spacingAndGlyphs" >Optimization</text>
<path d="M1291.9 719.2499999999999 L1291.9 717.9499999999999 A3.9 3.9 0 0 1 1299.7 717.9499999999999 L1299.7 719.2499999999999" stroke="#6e6e6e" stroke-width="2.5" fill="none" />
<path d="M1291.9 719.2499999999999 L1291.9 717.9499999999999 A3.9 3.9 0 0 1 1299.7 717.9499999999999 L1299.7 719.2499999999999" stroke="#ffffff" stroke-width="0.8" fill="none" />
<rect x="1290.0" y="719.2499999999999" width="11.6" height="8.4" rx="1.2" fill="#ffffff" stroke="#6e6e6e" stroke-width="1.1"/>
<line x1="1290.6000000000001" y1="727.4499999999999" x2="1301.0" y2="727.4499999999999" stroke="#6e6e6e" stroke-width="1.2"/>
<text transform="translate(1310 725.9499999999999) scale(0.95 1)" font-size="12" fill="#000" >Min Power</text>
<rect x="1048" y="730.8" width="499" height="20.0" fill="#ffffff" />
<circle cx="1098.8" cy="740.8" r="7.3" fill="none" stroke="#7a7a7a" stroke-width="1.1"/>
<path d="M1096.0 738.4 Q1096.2 735.5999999999999 1098.8 735.5999999999999 Q1101.8 735.5999999999999 1101.8 738.3 Q1101.8 740.1999999999999 1099.3999999999999 741.4 Q1098.8 742.0 1098.8 743.1999999999999" stroke="#6a6a6a" stroke-width="1.6" fill="none" />
<circle cx="1098.8" cy="745.4" r="1" fill="#6a6a6a"/>
<text x="1113" y="745.8" font-size="12" fill="#000" textLength="75" lengthAdjust="spacingAndGlyphs" >Divider P (0-7)</text>
<path d="M1291.9 739.0999999999999 L1291.9 737.8 A3.9 3.9 0 0 1 1299.7 737.8 L1299.7 739.0999999999999" stroke="#6e6e6e" stroke-width="2.5" fill="none" />
<path d="M1291.9 739.0999999999999 L1291.9 737.8 A3.9 3.9 0 0 1 1299.7 737.8 L1299.7 739.0999999999999" stroke="#ffffff" stroke-width="0.8" fill="none" />
<rect x="1290.0" y="739.0999999999999" width="11.6" height="8.4" rx="1.2" fill="#ffffff" stroke="#6e6e6e" stroke-width="1.1"/>
<line x1="1290.6000000000001" y1="747.3" x2="1301.0" y2="747.3" stroke="#6e6e6e" stroke-width="1.2"/>
<text transform="translate(1310 745.8) scale(0.95 1)" font-size="12" fill="#000" >0</text>
<rect x="1048" y="750.8" width="499" height="20.299999999999955" fill="#f3f3f3" />
<circle cx="1098.8" cy="760.9499999999999" r="7.3" fill="none" stroke="#7a7a7a" stroke-width="1.1"/>
<path d="M1096.0 758.55 Q1096.2 755.7499999999999 1098.8 755.7499999999999 Q1101.8 755.7499999999999 1101.8 758.4499999999999 Q1101.8 760.3499999999999 1099.3999999999999 761.55 Q1098.8 762.15 1098.8 763.3499999999999" stroke="#6a6a6a" stroke-width="1.6" fill="none" />
<circle cx="1098.8" cy="765.55" r="1" fill="#6a6a6a"/>
<text x="1113" y="765.9499999999999" font-size="12" fill="#000" textLength="90" lengthAdjust="spacingAndGlyphs" >Divider N (7-249)</text>
<path d="M1291.9 759.2499999999999 L1291.9 757.9499999999999 A3.9 3.9 0 0 1 1299.7 757.9499999999999 L1299.7 759.2499999999999" stroke="#6e6e6e" stroke-width="2.5" fill="none" />
<path d="M1291.9 759.2499999999999 L1291.9 757.9499999999999 A3.9 3.9 0 0 1 1299.7 757.9499999999999 L1299.7 759.2499999999999" stroke="#ffffff" stroke-width="0.8" fill="none" />
<rect x="1290.0" y="759.2499999999999" width="11.6" height="8.4" rx="1.2" fill="#ffffff" stroke="#6e6e6e" stroke-width="1.1"/>
<line x1="1290.6000000000001" y1="767.4499999999999" x2="1301.0" y2="767.4499999999999" stroke="#6e6e6e" stroke-width="1.2"/>
<text transform="translate(1310 765.9499999999999) scale(0.95 1)" font-size="12" fill="#000" >15</text>
<rect x="1048" y="771.0999999999999" width="499" height="20.0" fill="#ffffff" />
<circle cx="1098.8" cy="781.0999999999999" r="7.3" fill="none" stroke="#7a7a7a" stroke-width="1.1"/>
<path d="M1096.0 778.6999999999999 Q1096.2 775.8999999999999 1098.8 775.8999999999999 Q1101.8 775.8999999999999 1101.8 778.5999999999999 Q1101.8 780.4999999999999 1099.3999999999999 781.6999999999999 Q1098.8 782.3 1098.8 783.4999999999999" stroke="#6a6a6a" stroke-width="1.6" fill="none" />
<circle cx="1098.8" cy="785.6999999999999" r="1" fill="#6a6a6a"/>
<text x="1113" y="786.0999999999999" font-size="12" fill="#000" textLength="75" lengthAdjust="spacingAndGlyphs" >Divider K (0-7)</text>
<path d="M1291.9 779.3999999999999 L1291.9 778.0999999999999 A3.9 3.9 0 0 1 1299.7 778.0999999999999 L1299.7 779.3999999999999" stroke="#6e6e6e" stroke-width="2.5" fill="none" />
<path d="M1291.9 779.3999999999999 L1291.9 778.0999999999999 A3.9 3.9 0 0 1 1299.7 778.0999999999999 L1299.7 779.3999999999999" stroke="#ffffff" stroke-width="0.8" fill="none" />
<rect x="1290.0" y="779.3999999999999" width="11.6" height="8.4" rx="1.2" fill="#ffffff" stroke="#6e6e6e" stroke-width="1.1"/>
<line x1="1290.6000000000001" y1="787.5999999999999" x2="1301.0" y2="787.5999999999999" stroke="#6e6e6e" stroke-width="1.2"/>
<text transform="translate(1310 786.0999999999999) scale(0.95 1)" font-size="12" fill="#000" >1</text>
<rect x="1048" y="791.0999999999999" width="499" height="19.600000000000023" fill="#f3f3f3" />
<circle cx="1098.8" cy="800.8999999999999" r="7.3" fill="none" stroke="#7a7a7a" stroke-width="1.1"/>
<path d="M1096.0 798.4999999999999 Q1096.2 795.6999999999998 1098.8 795.6999999999998 Q1101.8 795.6999999999998 1101.8 798.3999999999999 Q1101.8 800.2999999999998 1099.3999999999999 801.4999999999999 Q1098.8 802.0999999999999 1098.8 803.2999999999998" stroke="#6a6a6a" stroke-width="1.6" fill="none" />
<circle cx="1098.8" cy="805.4999999999999" r="1" fill="#6a6a6a"/>
<text x="1113" y="805.8999999999999" font-size="12" fill="#000" textLength="155" lengthAdjust="spacingAndGlyphs" >Fraction divider (0-16777215)</text>
<path d="M1291.9 799.1999999999998 L1291.9 797.8999999999999 A3.9 3.9 0 0 1 1299.7 797.8999999999999 L1299.7 799.1999999999998" stroke="#6e6e6e" stroke-width="2.5" fill="none" />
<path d="M1291.9 799.1999999999998 L1291.9 797.8999999999999 A3.9 3.9 0 0 1 1299.7 797.8999999999999 L1299.7 799.1999999999998" stroke="#ffffff" stroke-width="0.8" fill="none" />
<rect x="1290.0" y="799.1999999999998" width="11.6" height="8.4" rx="1.2" fill="#ffffff" stroke="#6e6e6e" stroke-width="1.1"/>
<line x1="1290.6000000000001" y1="807.3999999999999" x2="1301.0" y2="807.3999999999999" stroke="#6e6e6e" stroke-width="1.2"/>
<text transform="translate(1310 805.8999999999999) scale(0.95 1)" font-size="12" fill="#000" >0</text>
<rect x="1048" y="810.6999999999999" width="499" height="20.0" fill="#ffffff" />
<circle cx="1098.8" cy="820.6999999999999" r="7.3" fill="none" stroke="#7a7a7a" stroke-width="1.1"/>
<path d="M1096.0 818.3 Q1096.2 815.4999999999999 1098.8 815.4999999999999 Q1101.8 815.4999999999999 1101.8 818.1999999999999 Q1101.8 820.0999999999999 1099.3999999999999 821.3 Q1098.8 821.9 1098.8 823.0999999999999" stroke="#6a6a6a" stroke-width="1.6" fill="none" />
<circle cx="1098.8" cy="825.3" r="1" fill="#6a6a6a"/>
<text x="1113" y="825.6999999999999" font-size="12" fill="#000" textLength="168" lengthAdjust="spacingAndGlyphs" >Frequency Mode Selection (0-7)</text>
<path d="M1291.9 818.9999999999999 L1291.9 817.6999999999999 A3.9 3.9 0 0 1 1299.7 817.6999999999999 L1299.7 818.9999999999999" stroke="#6e6e6e" stroke-width="2.5" fill="none" />
<path d="M1291.9 818.9999999999999 L1291.9 817.6999999999999 A3.9 3.9 0 0 1 1299.7 817.6999999999999 L1299.7 818.9999999999999" stroke="#ffffff" stroke-width="0.8" fill="none" />
<rect x="1290.0" y="818.9999999999999" width="11.6" height="8.4" rx="1.2" fill="#ffffff" stroke="#6e6e6e" stroke-width="1.1"/>
<line x1="1290.6000000000001" y1="827.1999999999999" x2="1301.0" y2="827.1999999999999" stroke="#6e6e6e" stroke-width="1.2"/>
<text transform="translate(1310 825.6999999999999) scale(0.95 1)" font-size="12" fill="#000" >7</text>
<rect x="1048" y="830.6999999999999" width="499" height="20.399999999999977" fill="#f3f3f3" />
<circle cx="1098.8" cy="840.9" r="7.3" fill="none" stroke="#7a7a7a" stroke-width="1.1"/>
<path d="M1096.0 838.5 Q1096.2 835.6999999999999 1098.8 835.6999999999999 Q1101.8 835.6999999999999 1101.8 838.4 Q1101.8 840.3 1099.3999999999999 841.5 Q1098.8 842.1 1098.8 843.3" stroke="#6a6a6a" stroke-width="1.6" fill="none" />
<circle cx="1098.8" cy="845.5" r="1" fill="#6a6a6a"/>
<text x="1113" y="845.9" font-size="12" fill="#000" textLength="149" lengthAdjust="spacingAndGlyphs" >Flock Enable Threshold (3/7)</text>
<path d="M1291.9 839.1999999999999 L1291.9 837.9 A3.9 3.9 0 0 1 1299.7 837.9 L1299.7 839.1999999999999" stroke="#6e6e6e" stroke-width="2.5" fill="none" />
<path d="M1291.9 839.1999999999999 L1291.9 837.9 A3.9 3.9 0 0 1 1299.7 837.9 L1299.7 839.1999999999999" stroke="#ffffff" stroke-width="0.8" fill="none" />
<rect x="1290.0" y="839.1999999999999" width="11.6" height="8.4" rx="1.2" fill="#ffffff" stroke="#6e6e6e" stroke-width="1.1"/>
<line x1="1290.6000000000001" y1="847.4" x2="1301.0" y2="847.4" stroke="#6e6e6e" stroke-width="1.2"/>
<text transform="translate(1310 845.9) scale(0.95 1)" font-size="12" fill="#000" >3</text>
<rect x="1048" y="851.0999999999999" width="499" height="19.700000000000045" fill="#ffffff" />
<circle cx="1098.8" cy="860.9499999999999" r="7.3" fill="none" stroke="#7a7a7a" stroke-width="1.1"/>
<path d="M1096.0 858.55 Q1096.2 855.7499999999999 1098.8 855.7499999999999 Q1101.8 855.7499999999999 1101.8 858.4499999999999 Q1101.8 860.3499999999999 1099.3999999999999 861.55 Q1098.8 862.15 1098.8 863.3499999999999" stroke="#6a6a6a" stroke-width="1.6" fill="none" />
<circle cx="1098.8" cy="865.55" r="1" fill="#6a6a6a"/>
<text x="1113" y="865.9499999999999" font-size="12" fill="#000" textLength="111" lengthAdjust="spacingAndGlyphs" >LF Beta Value (16/20)</text>
<path d="M1291.9 859.2499999999999 L1291.9 857.9499999999999 A3.9 3.9 0 0 1 1299.7 857.9499999999999 L1299.7 859.2499999999999" stroke="#6e6e6e" stroke-width="2.5" fill="none" />
<path d="M1291.9 859.2499999999999 L1291.9 857.9499999999999 A3.9 3.9 0 0 1 1299.7 857.9499999999999 L1299.7 859.2499999999999" stroke="#ffffff" stroke-width="0.8" fill="none" />
<rect x="1290.0" y="859.2499999999999" width="11.6" height="8.4" rx="1.2" fill="#ffffff" stroke="#6e6e6e" stroke-width="1.1"/>
<line x1="1290.6000000000001" y1="867.4499999999999" x2="1301.0" y2="867.4499999999999" stroke="#6e6e6e" stroke-width="1.2"/>
<text transform="translate(1310 865.9499999999999) scale(0.95 1)" font-size="12" fill="#000" >20</text>
<rect x="1048" y="870.8" width="499" height="19.899999999999977" fill="#f3f3f3" />
<rect x="1088.3" y="870.8" width="458.70000000000005" height="19.899999999999977" fill="#d0d0d0" />
<circle cx="1098.8" cy="880.75" r="7.3" fill="#b9d9f4" stroke="#5f86a8" stroke-width="1.2"/>
<path d="M1096.0 878.35 Q1096.2 875.55 1098.8 875.55 Q1101.8 875.55 1101.8 878.25 Q1101.8 880.15 1099.3999999999999 881.35 Q1098.8 881.95 1098.8 883.15" stroke="#5f7f99" stroke-width="1.6" fill="none" />
<circle cx="1098.8" cy="885.35" r="1" fill="#5f7f99"/>
<text x="1113" y="885.75" font-size="12" fill="#000" textLength="92" lengthAdjust="spacingAndGlyphs" >Actual Frequency</text>
<path d="M1291.9 879.05 L1291.9 877.75 A3.9 3.9 0 0 1 1299.7 877.75 L1299.7 879.05" stroke="#5f86a8" stroke-width="2.5" fill="none" />
<path d="M1291.9 879.05 L1291.9 877.75 A3.9 3.9 0 0 1 1299.7 877.75 L1299.7 879.05" stroke="#b9d9f4" stroke-width="0.8" fill="none" />
<rect x="1290.0" y="879.05" width="11.6" height="8.4" rx="1.2" fill="#b9d9f4" stroke="#5f86a8" stroke-width="1.1"/>
<line x1="1290.6000000000001" y1="887.25" x2="1301.0" y2="887.25" stroke="#5f86a8" stroke-width="1.2"/>
<text transform="translate(1310 885.75) scale(0.95 1)" font-size="12" fill="#000" >400 MHz ± 1%</text>
<line x1="1048.0" y1="528.2" x2="1048.0" y2="902" stroke="#828790" stroke-width="1.2"/>
<rect x="1024.5" y="103.5" width="16.5" height="828" fill="#f0f0f0" />
<line x1="1024.5" y1="131" x2="1024.5" y2="931" stroke="#828790" stroke-width="1.2"/>
<line x1="1035.7" y1="477" x2="1035.7" y2="931" stroke="#dcdcdc" stroke-width="1"/>
<line x1="1041.2" y1="902" x2="1041.2" y2="931" stroke="#828790" stroke-width="1.2"/>
<rect x="1041.4" y="902" width="505.6" height="29" fill="#ffffff" />
<line x1="1041.2" y1="902" x2="1041.2" y2="931" stroke="#828790" stroke-width="1.2"/>
<rect x="1084.3000000000002" y="264.4" width="228.7999999999999" height="24.7" fill="none" stroke="#ed1c24" stroke-width="4.8" />
<text transform="translate(1330 286.2) scale(1.06 1)" font-size="18" fill="#ed1c24" font-weight="bold" stroke="#ed1c24" stroke-width="0.25">2.3</text>
<rect x="1080.4" y="447.4" width="263.90000000000003" height="22.2" fill="none" stroke="#ed1c24" stroke-width="4.8" />
<text transform="translate(1356.6 462.9) scale(1.06 1)" font-size="18" fill="#ed1c24" font-weight="bold" stroke="#ed1c24" stroke-width="0.25">2.3</text>
<rect x="1089.9" y="691.4" width="243.10000000000008" height="20.400000000000045" fill="none" stroke="#ed1c24" stroke-width="4.8" />
<text transform="translate(1350.2 707.3) scale(1.06 1)" font-size="18" fill="#ed1c24" font-weight="bold" stroke="#ed1c24" stroke-width="0.25">2.7</text>
<rect x="1089.2" y="870.9" width="301.99999999999994" height="19.300000000000022" fill="none" stroke="#ed1c24" stroke-width="4.8" />
<text transform="translate(1414.4 887.5) scale(1.06 1)" font-size="18" fill="#ed1c24" font-weight="bold" stroke="#ed1c24" stroke-width="0.25">2.8</text>
<rect x="0" y="931" width="1547" height="281" fill="#ffffff" />
<rect x="0" y="931" width="621" height="281" fill="#ffffff" />
<rect x="616" y="931" width="5" height="281" fill="#ece9d8" />
<rect x="0" y="938.1" width="616" height="20.7" fill="#d9d9d9" stroke="#bdbdbd" stroke-width="1" />
<text x="5" y="954.3000000000001" font-size="12" fill="#000" textLength="118" lengthAdjust="spacingAndGlyphs" >CLK_HF1 - Parameters</text>
<rect x="587.6" y="944.5" width="5.3" height="5.2" fill="none" stroke="#222" stroke-width="1.2" />
<line x1="587.0" y1="944.9" x2="593.5" y2="944.9" stroke="#222" stroke-width="1.6"/>
<rect x="585.5" y="947.7" width="5.3" height="5.2" fill="#e6e6e6" stroke="#222" stroke-width="1.2" />
<line x1="584.9" y1="948.1" x2="591.4" y2="948.1" stroke="#222" stroke-width="1.6"/>
<path d="M606.0 944.6500000000001 L613.5999999999999 952.25 M613.5999999999999 944.6500000000001 L606.0 952.25" stroke="#2a2a2a" stroke-width="1.9" fill="none" />
<rect x="0" y="958.8000000000001" width="616" height="30.5" fill="#f0f0f0" />
<rect x="0.5" y="963.9" width="520" height="22.0" fill="#ffffff" stroke="#7a7a7a" stroke-width="1.1" />
<text x="3.5" y="980.1999999999999" font-size="12" fill="#858585" textLength="88" lengthAdjust="spacingAndGlyphs" >Enter filter text...</text>
<path d="M500.5 981.4 L506.5 969.4 L512.5 969.4 L506.5 981.4 Z" stroke="#b49a78" stroke-width="1" fill="#efe3d3" />
<line x1="506.5" y1="981.4" x2="515.5" y2="981.4" stroke="#b49a78" stroke-width="1"/>
<path d="M529.7 970.9 A4.9 4.9 0 1 0 535.65 971.15" stroke="#2f6fd6" stroke-width="2.8" fill="none" />
<path d="M532.9 968.3 L538.9 967.5 L538.3 973.5 Z" stroke="none" stroke-width="1" fill="#2f6fd6" />
<line x1="547" y1="966.4" x2="547" y2="984.4" stroke="#d0d0d0" stroke-width="1"/>
<path d="M554.0 968.4 L569.0 968.4 L563.0 975.4 L563.0 981.9 L560.0 979.9 L560.0 975.4 Z" stroke="#555" stroke-width="1" fill="#9a9a9a" />
<path d="M561.1 975.9 L561.1 979.5" stroke="#ffffff" stroke-width="0.9" fill="none" />
<rect x="578.5" y="968.4" width="10" height="10" fill="#eaf2fb" stroke="#9aa9c0" stroke-width="1" />
<rect x="581.5" y="971.4" width="10" height="10" fill="#f4f8fd" stroke="#7f8fa8" stroke-width="1.2" />
<line x1="583.5" y1="976.4" x2="589.5" y2="976.4" stroke="#1d4f8a" stroke-width="1.6"/>
<rect x="601.5" y="968.4" width="10" height="10" fill="#eaf2fb" stroke="#9aa9c0" stroke-width="1" />
<rect x="604.5" y="971.4" width="10" height="10" fill="#f4f8fd" stroke="#7f8fa8" stroke-width="1.2" />
<line x1="606.5" y1="976.4" x2="612.5" y2="976.4" stroke="#1d4f8a" stroke-width="1.6"/>
<line x1="609.5" y1="973.4" x2="609.5" y2="979.4" stroke="#1d4f8a" stroke-width="1.6"/>
<rect x="0" y="989.3000000000001" width="616" height="222.69999999999993" fill="#ffffff" />
<line x1="0" y1="989.8000000000001" x2="616" y2="989.8000000000001" stroke="#828790" stroke-width="1.2"/>
<line x1="168.6" y1="990.3000000000001" x2="168.6" y2="1014.3000000000001" stroke="#e3e3e3" stroke-width="1"/>
<text x="3.5" y="1007.3000000000001" font-size="12" fill="#000" textLength="30" lengthAdjust="spacingAndGlyphs" >Name</text>
<text x="173.1" y="1007.3000000000001" font-size="12" fill="#000" textLength="29" lengthAdjust="spacingAndGlyphs" >Value</text>
<path d="M5 1020.3000000000001 L9 1024.3000000000002 L13 1020.3000000000001" stroke="#333" stroke-width="1.1" fill="none" />
<text x="22" y="1027.3000000000002" font-size="12" fill="#000" textLength="48" lengthAdjust="spacingAndGlyphs" >Overview</text>
<rect x="1" y="1031.7" width="615" height="56.299999999999955" fill="#f3f3f3" />
<circle cx="49.6" cy="1061.0" r="7.3" fill="none" stroke="#7a7a7a" stroke-width="1.1"/>
<path d="M46.800000000000004 1058.6 Q47.0 1055.8 49.6 1055.8 Q52.6 1055.8 52.6 1058.5 Q52.6 1060.4 50.2 1061.6 Q49.6 1062.2 49.6 1063.4" stroke="#6a6a6a" stroke-width="1.6" fill="none" />
<circle cx="49.6" cy="1065.6" r="1" fill="#6a6a6a"/>
<text x="64.1" y="1065.3" font-size="12" fill="#000" textLength="100" lengthAdjust="spacingAndGlyphs" >Configuration Help</text>
<text x="172.6" y="1065.3" font-size="12" fill="#1a0dff" textLength="239" lengthAdjust="spacingAndGlyphs" >Open High-Frequency Clocks Documentation</text>
<line x1="172.6" y1="1067.7" x2="411.6" y2="1067.7" stroke="#1a0dff" stroke-width="1"/>
<path d="M5 1094.0 L9 1098.0 L13 1094.0" stroke="#333" stroke-width="1.1" fill="none" />
<text x="22" y="1101.0" font-size="12" fill="#000" textLength="40" lengthAdjust="spacingAndGlyphs" >General</text>
<rect x="1" y="1106.1" width="615" height="20.0" fill="#f3f3f3" />
<rect x="169.1" y="1106.6" width="446.4" height="19" fill="#ffffff" stroke="#d0d0d0" stroke-width="1" />
<circle cx="49.6" cy="1116.1" r="7.3" fill="none" stroke="#7a7a7a" stroke-width="1.1"/>
<path d="M46.800000000000004 1113.6999999999998 Q47.0 1110.8999999999999 49.6 1110.8999999999999 Q52.6 1110.8999999999999 52.6 1113.6 Q52.6 1115.5 50.2 1116.6999999999998 Q49.6 1117.3 49.6 1118.5" stroke="#6a6a6a" stroke-width="1.6" fill="none" />
<circle cx="49.6" cy="1120.6999999999998" r="1" fill="#6a6a6a"/>
<text x="64.1" y="1120.3999999999999" font-size="12" fill="#000" textLength="70" lengthAdjust="spacingAndGlyphs" >Source Clock</text>
<text x="172.6" y="1120.3999999999999" font-size="12" fill="#000" textLength="59" lengthAdjust="spacingAndGlyphs" >CLK_PATH2</text>
<path d="M605 1113.3 L610.5 1118.8 L616 1113.3" stroke="#444" stroke-width="1.1" fill="none" />
<rect x="1" y="1126.1" width="615" height="20.700000000000045" fill="#ffffff" />
<circle cx="49.6" cy="1136.4499999999998" r="7.3" fill="none" stroke="#7a7a7a" stroke-width="1.1"/>
<path d="M46.800000000000004 1134.0499999999997 Q47.0 1131.2499999999998 49.6 1131.2499999999998 Q52.6 1131.2499999999998 52.6 1133.9499999999998 Q52.6 1135.85 50.2 1137.0499999999997 Q49.6 1137.6499999999999 49.6 1138.85" stroke="#6a6a6a" stroke-width="1.6" fill="none" />
<circle cx="49.6" cy="1141.0499999999997" r="1" fill="#6a6a6a"/>
<text x="64.1" y="1140.6999999999998" font-size="12" fill="#000" textLength="94" lengthAdjust="spacingAndGlyphs" >Source Frequency</text>
<path d="M174.6 1134.7499999999998 L174.6 1133.4499999999998 A3.9 3.9 0 0 1 182.4 1133.4499999999998 L182.4 1134.7499999999998" stroke="#6e6e6e" stroke-width="2.5" fill="none" />
<path d="M174.6 1134.7499999999998 L174.6 1133.4499999999998 A3.9 3.9 0 0 1 182.4 1133.4499999999998 L182.4 1134.7499999999998" stroke="#ffffff" stroke-width="0.8" fill="none" />
<rect x="172.7" y="1134.7499999999998" width="11.6" height="8.4" rx="1.2" fill="#ffffff" stroke="#6e6e6e" stroke-width="1.1"/>
<line x1="173.29999999999998" y1="1142.9499999999998" x2="183.7" y2="1142.9499999999998" stroke="#6e6e6e" stroke-width="1.2"/>
<text transform="translate(193.1 1140.6999999999998) scale(0.95 1)" font-size="12" fill="#000" >400 MHz ± 1%</text>
<rect x="1" y="1146.8" width="615" height="20.299999999999955" fill="#f3f3f3" />
<rect x="169.1" y="1147.3" width="446.4" height="19.3" fill="#ffffff" stroke="#d0d0d0" stroke-width="1" />
<circle cx="49.6" cy="1156.95" r="7.3" fill="none" stroke="#7a7a7a" stroke-width="1.1"/>
<path d="M46.800000000000004 1154.55 Q47.0 1151.75 49.6 1151.75 Q52.6 1151.75 52.6 1154.45 Q52.6 1156.3500000000001 50.2 1157.55 Q49.6 1158.15 49.6 1159.3500000000001" stroke="#6a6a6a" stroke-width="1.6" fill="none" />
<circle cx="49.6" cy="1161.55" r="1" fill="#6a6a6a"/>
<text x="64.1" y="1161.3" font-size="12" fill="#000" textLength="37" lengthAdjust="spacingAndGlyphs" >Divider</text>
<text x="172.6" y="1161.3" font-size="12" fill="#000" >1</text>
<path d="M605 1154.15 L610.5 1159.65 L616 1154.15" stroke="#444" stroke-width="1.1" fill="none" />
<rect x="1" y="1167.1" width="615" height="21.299999999999955" fill="#ffffff" />
<rect x="39" y="1167.1" width="577" height="21.299999999999955" fill="#d0d0d0" />
<circle cx="49.6" cy="1177.75" r="7.3" fill="#b9d9f4" stroke="#5f86a8" stroke-width="1.2"/>
<path d="M46.800000000000004 1175.35 Q47.0 1172.55 49.6 1172.55 Q52.6 1172.55 52.6 1175.25 Q52.6 1177.15 50.2 1178.35 Q49.6 1178.95 49.6 1180.15" stroke="#5f7f99" stroke-width="1.6" fill="none" />
<circle cx="49.6" cy="1182.35" r="1" fill="#5f7f99"/>
<text x="64.1" y="1182.1" font-size="12" fill="#000" textLength="54" lengthAdjust="spacingAndGlyphs" >Frequency</text>
<path d="M174.6 1176.05 L174.6 1174.75 A3.9 3.9 0 0 1 182.4 1174.75 L182.4 1176.05" stroke="#5f86a8" stroke-width="2.5" fill="none" />
<path d="M174.6 1176.05 L174.6 1174.75 A3.9 3.9 0 0 1 182.4 1174.75 L182.4 1176.05" stroke="#b9d9f4" stroke-width="0.8" fill="none" />
<rect x="172.7" y="1176.05" width="11.6" height="8.4" rx="1.2" fill="#b9d9f4" stroke="#5f86a8" stroke-width="1.1"/>
<line x1="173.29999999999998" y1="1184.25" x2="183.7" y2="1184.25" stroke="#5f86a8" stroke-width="1.2"/>
<text transform="translate(193.1 1182.1) scale(0.95 1)" font-size="12" fill="#000" >400 MHz ± 1%</text>
<rect x="1" y="1188.3999999999999" width="615" height="23.600000000000136" fill="#f3f3f3" />
<circle cx="49.6" cy="1200.8999999999999" r="7.3" fill="none" stroke="#7a7a7a" stroke-width="1.1"/>
<path d="M46.800000000000004 1198.4999999999998 Q47.0 1195.6999999999998 49.6 1195.6999999999998 Q52.6 1195.6999999999998 52.6 1198.3999999999999 Q52.6 1200.3 50.2 1201.4999999999998 Q49.6 1202.1 49.6 1203.3" stroke="#6a6a6a" stroke-width="1.6" fill="none" />
<circle cx="49.6" cy="1205.4999999999998" r="1" fill="#6a6a6a"/>
<text x="64.1" y="1204.8999999999999" font-size="12" fill="#000" textLength="71" lengthAdjust="spacingAndGlyphs" >Clock Output</text>
<rect x="170.1" y="1188.8999999999999" width="24.5" height="23" fill="#ffffff" stroke="#d6d6d6" stroke-width="1" rx="2"/>
<rect x="175.4" y="1198.8" width="8.4" height="5.2" rx="2.6" transform="rotate(-45 179.6 1201.3999999999999)" fill="none" stroke="#1a1a1a" stroke-width="1.3"/>
<rect x="181.4" y="1194.8" width="8.4" height="5.2" rx="2.6" transform="rotate(-45 185.6 1197.3999999999999)" fill="none" stroke="#1a1a1a" stroke-width="1.3"/>
<rect x="199.1" y="1188.8999999999999" width="413.9" height="23" fill="#ffffff" stroke="#d6d6d6" stroke-width="1" rx="2"/>
<circle cx="209.1" cy="1201.3999999999999" r="8.3" fill="#0ae60a"/>
<text x="223.1" y="1205.1999999999998" font-size="12" fill="#000" textLength="376" lengthAdjust="spacingAndGlyphs" >Universal Serial Bus (USB) 0 mmio_clk_hf (CYBSP_USB_DEVICE_0) [USED]</text>
<text x="606.5" y="1205.1999999999998" font-size="12" fill="#000" >...</text>
<rect x="621.2" y="933.3" width="632.3" height="20.7" fill="#d9d9d9" stroke="#bdbdbd" stroke-width="1" />
<text x="626.2" y="949.5" font-size="12" fill="#000" textLength="118" lengthAdjust="spacingAndGlyphs" >CLK_HF8 - Parameters</text>
<rect x="1220.6" y="939.6999999999999" width="5.3" height="5.2" fill="none" stroke="#222" stroke-width="1.2" />
<line x1="1219.9999999999998" y1="940.0999999999999" x2="1226.4999999999998" y2="940.0999999999999" stroke="#222" stroke-width="1.6"/>
<rect x="1218.4999999999998" y="942.9" width="5.3" height="5.2" fill="#e6e6e6" stroke="#222" stroke-width="1.2" />
<line x1="1217.8999999999999" y1="943.3" x2="1224.3999999999999" y2="943.3" stroke="#222" stroke-width="1.6"/>
<path d="M1239.0 939.85 L1246.6 947.4499999999999 M1246.6 939.85 L1239.0 947.4499999999999" stroke="#2a2a2a" stroke-width="1.9" fill="none" />
<rect x="621.2" y="954.0" width="632.3" height="30.5" fill="#f0f0f0" />
<rect x="623.7" y="959.0999999999999" width="530.3" height="22.0" fill="#ffffff" stroke="#7a7a7a" stroke-width="1.1" />
<text x="626.7" y="975.3999999999999" font-size="12" fill="#858585" textLength="88" lengthAdjust="spacingAndGlyphs" >Enter filter text...</text>
<path d="M1134.0 976.5999999999999 L1140.0 964.5999999999999 L1146.0 964.5999999999999 L1140.0 976.5999999999999 Z" stroke="#b49a78" stroke-width="1" fill="#efe3d3" />
<line x1="1140.0" y1="976.5999999999999" x2="1149.0" y2="976.5999999999999" stroke="#b49a78" stroke-width="1"/>
<path d="M1163.2 966.0999999999999 A4.9 4.9 0 1 0 1169.15 966.3499999999999" stroke="#2f6fd6" stroke-width="2.8" fill="none" />
<path d="M1166.4 963.4999999999999 L1172.4 962.6999999999999 L1171.8 968.6999999999999 Z" stroke="none" stroke-width="1" fill="#2f6fd6" />
<line x1="1180.5" y1="961.5999999999999" x2="1180.5" y2="979.5999999999999" stroke="#d0d0d0" stroke-width="1"/>
<path d="M1187.5 963.5999999999999 L1202.5 963.5999999999999 L1196.5 970.5999999999999 L1196.5 977.0999999999999 L1193.5 975.0999999999999 L1193.5 970.5999999999999 Z" stroke="#555" stroke-width="1" fill="#9a9a9a" />
<path d="M1194.6 971.0999999999999 L1194.6 974.6999999999999" stroke="#ffffff" stroke-width="0.9" fill="none" />
<rect x="1212.0" y="963.5999999999999" width="10" height="10" fill="#eaf2fb" stroke="#9aa9c0" stroke-width="1" />
<rect x="1215.0" y="966.5999999999999" width="10" height="10" fill="#f4f8fd" stroke="#7f8fa8" stroke-width="1.2" />
<line x1="1217.0" y1="971.5999999999999" x2="1223.0" y2="971.5999999999999" stroke="#1d4f8a" stroke-width="1.6"/>
<rect x="1235.0" y="963.5999999999999" width="10" height="10" fill="#eaf2fb" stroke="#9aa9c0" stroke-width="1" />
<rect x="1238.0" y="966.5999999999999" width="10" height="10" fill="#f4f8fd" stroke="#7f8fa8" stroke-width="1.2" />
<line x1="1240.0" y1="971.5999999999999" x2="1246.0" y2="971.5999999999999" stroke="#1d4f8a" stroke-width="1.6"/>
<line x1="1243.0" y1="968.5999999999999" x2="1243.0" y2="974.5999999999999" stroke="#1d4f8a" stroke-width="1.6"/>
<rect x="621.2" y="984.5" width="632.3" height="227.5" fill="#ffffff" />
<line x1="621.2" y1="985.0" x2="1253.5" y2="985.0" stroke="#828790" stroke-width="1.2"/>
<line x1="621.8000000000001" y1="984.5" x2="621.8000000000001" y2="1212" stroke="#828790" stroke-width="1.2"/>
<line x1="791.2" y1="985.5" x2="791.2" y2="1009.5" stroke="#e3e3e3" stroke-width="1"/>
<text x="626.7" y="1002.5" font-size="12" fill="#000" textLength="30" lengthAdjust="spacingAndGlyphs" >Name</text>
<text x="795.7" y="1002.5" font-size="12" fill="#000" textLength="29" lengthAdjust="spacingAndGlyphs" >Value</text>
<path d="M628.2 1015.5 L632.2 1019.5 L636.2 1015.5" stroke="#333" stroke-width="1.1" fill="none" />
<text x="645.2" y="1022.5" font-size="12" fill="#000" textLength="48" lengthAdjust="spacingAndGlyphs" >Overview</text>
<rect x="622.2" y="1026.9" width="631.3" height="56.299999999999955" fill="#f3f3f3" />
<circle cx="672.8000000000001" cy="1056.2" r="7.3" fill="none" stroke="#7a7a7a" stroke-width="1.1"/>
<path d="M670.0000000000001 1053.8 Q670.2 1051.0 672.8000000000001 1051.0 Q675.8000000000001 1051.0 675.8000000000001 1053.7 Q675.8000000000001 1055.6000000000001 673.4000000000001 1056.8 Q672.8000000000001 1057.4 672.8000000000001 1058.6000000000001" stroke="#6a6a6a" stroke-width="1.6" fill="none" />
<circle cx="672.8000000000001" cy="1060.8" r="1" fill="#6a6a6a"/>
<text x="687.3000000000001" y="1060.5" font-size="12" fill="#000" textLength="100" lengthAdjust="spacingAndGlyphs" >Configuration Help</text>
<text x="795.2" y="1060.5" font-size="12" fill="#1a0dff" textLength="239" lengthAdjust="spacingAndGlyphs" >Open High-Frequency Clocks Documentation</text>
<line x1="795.2" y1="1062.9" x2="1034.2" y2="1062.9" stroke="#1a0dff" stroke-width="1"/>
<path d="M628.2 1089.2 L632.2 1093.2 L636.2 1089.2" stroke="#333" stroke-width="1.1" fill="none" />
<text x="645.2" y="1096.2" font-size="12" fill="#000" textLength="40" lengthAdjust="spacingAndGlyphs" >General</text>
<rect x="622.2" y="1101.3" width="631.3" height="20.0" fill="#f3f3f3" />
<rect x="665.2" y="1101.3" width="128" height="20" fill="#cce4f7" />
<line x1="665.2" y1="1120.8" x2="791.2" y2="1120.8" stroke="#3c8ad8" stroke-width="1.2"/>
<line x1="665.2" y1="1101.8" x2="791.2" y2="1101.8" stroke="#3c8ad8" stroke-width="1.2"/>
<rect x="791.7" y="1101.8" width="461.29999999999995" height="19" fill="#ffffff" stroke="#d0d0d0" stroke-width="1" />
<circle cx="672.8000000000001" cy="1111.3" r="7.3" fill="#b9d9f4" stroke="#5f86a8" stroke-width="1.2"/>
<path d="M670.0000000000001 1108.8999999999999 Q670.2 1106.1 672.8000000000001 1106.1 Q675.8000000000001 1106.1 675.8000000000001 1108.8 Q675.8000000000001 1110.7 673.4000000000001 1111.8999999999999 Q672.8000000000001 1112.5 672.8000000000001 1113.7" stroke="#5f7f99" stroke-width="1.6" fill="none" />
<circle cx="672.8000000000001" cy="1115.8999999999999" r="1" fill="#5f7f99"/>
<text x="687.3000000000001" y="1115.6" font-size="12" fill="#000" textLength="70" lengthAdjust="spacingAndGlyphs" >Source Clock</text>
<text x="795.2" y="1115.6" font-size="12" fill="#000" textLength="59" lengthAdjust="spacingAndGlyphs" >CLK_PATH1</text>
<path d="M1242.5 1108.5 L1248.0 1114.0 L1253.5 1108.5" stroke="#444" stroke-width="1.1" fill="none" />
<rect x="622.2" y="1121.3" width="631.3" height="20.700000000000045" fill="#ffffff" />
<circle cx="672.8000000000001" cy="1131.6499999999999" r="7.3" fill="none" stroke="#7a7a7a" stroke-width="1.1"/>
<path d="M670.0000000000001 1129.2499999999998 Q670.2 1126.4499999999998 672.8000000000001 1126.4499999999998 Q675.8000000000001 1126.4499999999998 675.8000000000001 1129.1499999999999 Q675.8000000000001 1131.05 673.4000000000001 1132.2499999999998 Q672.8000000000001 1132.85 672.8000000000001 1134.05" stroke="#6a6a6a" stroke-width="1.6" fill="none" />
<circle cx="672.8000000000001" cy="1136.2499999999998" r="1" fill="#6a6a6a"/>
<text x="687.3000000000001" y="1135.8999999999999" font-size="12" fill="#000" textLength="94" lengthAdjust="spacingAndGlyphs" >Source Frequency</text>
<path d="M798.2 1129.9499999999998 L798.2 1128.6499999999999 A3.9 3.9 0 0 1 806.0 1128.6499999999999 L806.0 1129.9499999999998" stroke="#6e6e6e" stroke-width="2.5" fill="none" />
<path d="M798.2 1129.9499999999998 L798.2 1128.6499999999999 A3.9 3.9 0 0 1 806.0 1128.6499999999999 L806.0 1129.9499999999998" stroke="#ffffff" stroke-width="0.8" fill="none" />
<rect x="796.3000000000001" y="1129.9499999999998" width="11.6" height="8.4" rx="1.2" fill="#ffffff" stroke="#6e6e6e" stroke-width="1.1"/>
<line x1="796.9000000000001" y1="1138.1499999999999" x2="807.3000000000001" y2="1138.1499999999999" stroke="#6e6e6e" stroke-width="1.2"/>
<text transform="translate(816.7 1135.8999999999999) scale(0.95 1)" font-size="12" fill="#000" >200 MHz</text>
<rect x="622.2" y="1142.0" width="631.3" height="20.299999999999955" fill="#f3f3f3" />
<rect x="791.7" y="1142.5" width="461.29999999999995" height="19.3" fill="#ffffff" stroke="#d0d0d0" stroke-width="1" />
<circle cx="672.8000000000001" cy="1152.15" r="7.3" fill="none" stroke="#7a7a7a" stroke-width="1.1"/>
<path d="M670.0000000000001 1149.75 Q670.2 1146.95 672.8000000000001 1146.95 Q675.8000000000001 1146.95 675.8000000000001 1149.65 Q675.8000000000001 1151.5500000000002 673.4000000000001 1152.75 Q672.8000000000001 1153.3500000000001 672.8000000000001 1154.5500000000002" stroke="#6a6a6a" stroke-width="1.6" fill="none" />
<circle cx="672.8000000000001" cy="1156.75" r="1" fill="#6a6a6a"/>
<text x="687.3000000000001" y="1156.5" font-size="12" fill="#000" textLength="37" lengthAdjust="spacingAndGlyphs" >Divider</text>
<text x="795.2" y="1156.5" font-size="12" fill="#000" >4</text>
<path d="M1242.5 1149.3500000000001 L1248.0 1154.8500000000001 L1253.5 1149.3500000000001" stroke="#444" stroke-width="1.1" fill="none" />
<rect x="622.2" y="1162.3" width="631.3" height="21.299999999999955" fill="#ffffff" />
<circle cx="672.8000000000001" cy="1172.95" r="7.3" fill="none" stroke="#7a7a7a" stroke-width="1.1"/>
<path d="M670.0000000000001 1170.55 Q670.2 1167.75 672.8000000000001 1167.75 Q675.8000000000001 1167.75 675.8000000000001 1170.45 Q675.8000000000001 1172.3500000000001 673.4000000000001 1173.55 Q672.8000000000001 1174.15 672.8000000000001 1175.3500000000001" stroke="#6a6a6a" stroke-width="1.6" fill="none" />
<circle cx="672.8000000000001" cy="1177.55" r="1" fill="#6a6a6a"/>
<text x="687.3000000000001" y="1177.3" font-size="12" fill="#000" textLength="54" lengthAdjust="spacingAndGlyphs" >Frequency</text>
<path d="M798.2 1171.25 L798.2 1169.95 A3.9 3.9 0 0 1 806.0 1169.95 L806.0 1171.25" stroke="#6e6e6e" stroke-width="2.5" fill="none" />
<path d="M798.2 1171.25 L798.2 1169.95 A3.9 3.9 0 0 1 806.0 1169.95 L806.0 1171.25" stroke="#ffffff" stroke-width="0.8" fill="none" />
<rect x="796.3000000000001" y="1171.25" width="11.6" height="8.4" rx="1.2" fill="#ffffff" stroke="#6e6e6e" stroke-width="1.1"/>
<line x1="796.9000000000001" y1="1179.45" x2="807.3000000000001" y2="1179.45" stroke="#6e6e6e" stroke-width="1.2"/>
<text transform="translate(816.7 1177.3) scale(0.95 1)" font-size="12" fill="#000" >50 MHz</text>
<rect x="622.2" y="1183.6" width="631.3" height="28.40000000000009" fill="#f3f3f3" />
<circle cx="672.8000000000001" cy="1196.1" r="7.3" fill="none" stroke="#7a7a7a" stroke-width="1.1"/>
<path d="M670.0000000000001 1193.6999999999998 Q670.2 1190.8999999999999 672.8000000000001 1190.8999999999999 Q675.8000000000001 1190.8999999999999 675.8000000000001 1193.6 Q675.8000000000001 1195.5 673.4000000000001 1196.6999999999998 Q672.8000000000001 1197.3 672.8000000000001 1198.5" stroke="#6a6a6a" stroke-width="1.6" fill="none" />
<circle cx="672.8000000000001" cy="1200.6999999999998" r="1" fill="#6a6a6a"/>
<text x="687.3000000000001" y="1200.1" font-size="12" fill="#000" textLength="71" lengthAdjust="spacingAndGlyphs" >Clock Output</text>
<rect x="792.7" y="1184.1" width="24.5" height="23" fill="#ffffff" stroke="#d6d6d6" stroke-width="1" rx="2"/>
<rect x="798.0" y="1194.0" width="8.4" height="5.2" rx="2.6" transform="rotate(-45 802.2 1196.6)" fill="none" stroke="#1a1a1a" stroke-width="1.3"/>
<rect x="804.0" y="1190.0" width="8.4" height="5.2" rx="2.6" transform="rotate(-45 808.2 1192.6)" fill="none" stroke="#1a1a1a" stroke-width="1.3"/>
<rect x="821.7" y="1184.1" width="428.79999999999995" height="23" fill="#ffffff" stroke="#d6d6d6" stroke-width="1" rx="2"/>
<circle cx="831.7" cy="1196.6" r="8.3" fill="#0ae60a"/>
<text x="845.7" y="1200.3999999999999" font-size="12" fill="#000" textLength="393" lengthAdjust="spacingAndGlyphs" >Universal Serial Bus (USB) 0 clk_phy_pll_ref (CYBSP_USB_DEVICE_0) [USED]</text>
<text x="1244.0" y="1200.3999999999999" font-size="12" fill="#000" >...</text>
<rect x="37.45" y="1104.65" width="200.3" height="24.5" fill="none" stroke="#ed1c24" stroke-width="4.5" />
<text transform="translate(254.4 1123.4) scale(1.06 1)" font-size="18" fill="#ed1c24" font-weight="bold" stroke="#ed1c24" stroke-width="0.25">2.4</text>
<rect x="37.45" y="1168.75" width="239.2" height="21.40000000000009" fill="none" stroke="#ed1c24" stroke-width="4.5" />
<text transform="translate(305 1185.0) scale(1.06 1)" font-size="18" fill="#ed1c24" font-weight="bold" stroke="#ed1c24" stroke-width="0.25">2.5</text>
<rect x="660.8" y="1097.3000000000002" width="196.50000000000006" height="26.7" fill="none" stroke="#ed1c24" stroke-width="4.8" />
<text transform="translate(873.6 1118.4) scale(1.06 1)" font-size="18" fill="#ed1c24" font-weight="bold" stroke="#ed1c24" stroke-width="0.25">2.9</text>
<rect x="662.5" y="1163.0" width="198" height="20.90000000000009" fill="none" stroke="#ed1c24" stroke-width="5" />
<text transform="translate(881.9 1180.5) scale(1.06 1)" font-size="18" fill="#ed1c24" font-weight="bold" stroke="#ed1c24" stroke-width="0.25">2.10</text>
<text transform="translate(101 136.5) scale(1.06 1)" font-size="17" fill="#ed1c24" font-weight="bold" stroke="#ed1c24" stroke-width="0.25">2.1</text>
</svg></body></html>
